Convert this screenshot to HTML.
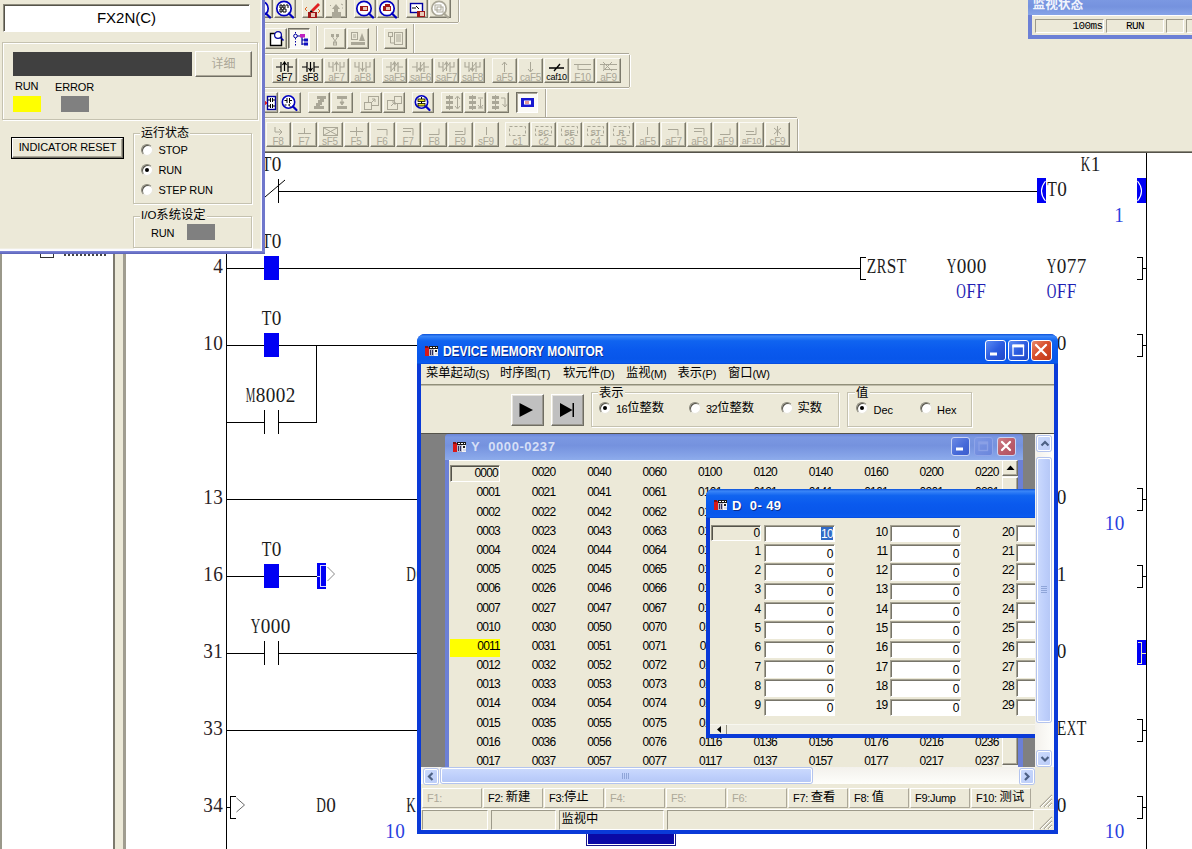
<!DOCTYPE html><html><head><meta charset="utf-8"><title>GX Developer</title><style>
html,body{margin:0;padding:0}
body{width:1192px;height:849px;position:relative;overflow:hidden;background:#fff;font-family:"Liberation Sans",sans-serif;font-size:11px;color:#000}
.a{position:absolute;box-sizing:border-box}
.fx{display:flex;align-items:center}
.lt{font-family:"Liberation Serif",serif;font-size:21px}
.btn{background:#ece9d8;border:1px solid;border-color:#fff #716f64 #716f64 #fff;box-shadow:inset -1px -1px 0 #aca899}
.tb{background:#ece9d8;border:1px solid;border-color:#fbfaf5 #7b796b #7b796b #fbfaf5;box-shadow:inset -1px -1px 0 #b3b09e}
.sunk{border:1px solid;border-color:#8d8b7c #fff #fff #8d8b7c;box-shadow:inset 1px 1px 0 #55534a}
.sunk2{border:1px solid;border-color:#a5a292 #fff #fff #a5a292;box-shadow:inset 1px 1px 0 #77756a}
.sunk1{border:1px solid;border-color:#9d9a8a #fff #fff #9d9a8a}
.grp{border:1px solid #c5c2b0;box-shadow:1px 1px 0 #fff, inset 1px 1px 0 #fff}
.radio{width:12px;height:12px;border-radius:50%;background:#fff;border:1px solid;border-color:#8a887a #e9e7dc #e9e7dc #8a887a;box-shadow:inset 1px 1px 0 #55534a}
.radio.on::after{content:"";position:absolute;left:3px;top:3px;width:4px;height:4px;border-radius:50%;background:#000}
.dis{color:#aca899}
.cj{display:block;flex:none;white-space:nowrap;letter-spacing:0;font-family:"Liberation Sans","Noto Sans CJK SC",sans-serif}

</style></head><body>
<div class="a " style="left:0px;top:0px;width:1192px;height:151px;background:#ece9d8"></div>
<div class="a " style="left:0px;top:151px;width:1192px;height:1px;background:#8d8b7c"></div>
<div class="a " style="left:0px;top:152px;width:1192px;height:1px;background:#55534a"></div>
<div class="a " style="left:0px;top:153px;width:2px;height:696px;background:#9a988a"></div>
<div class="a " style="left:113px;top:153px;width:2px;height:696px;background:#7d7a6e"></div>
<div class="a " style="left:115px;top:153px;width:8px;height:696px;background:#ece9d8"></div>
<div class="a " style="left:123px;top:153px;width:3px;height:696px;background:#a09d90"></div>
<svg class="a lt" style="left:0;top:0" width="1192" height="849" shape-rendering="crispEdges"><rect x="226" y="153" width="1" height="696" fill="#000"/><rect x="1146" y="153" width="1" height="696" fill="#000"/><rect x="226" y="191" width="38" height="1" fill="#000"/><rect x="264" y="179" width="1" height="24" fill="#000"/><rect x="278" y="179" width="1" height="24" fill="#000"/><rect x="278" y="191" width="759" height="1" fill="#000"/><line x1="265" y1="197" x2="285" y2="180" stroke="#000" stroke-width="1" shape-rendering="auto"/><text x="261.7" y="171" fill="#1c1c1c" textLength="9.6" lengthAdjust="spacingAndGlyphs">T</text><text x="271.7" y="171" fill="#1c1c1c" textLength="9.6" lengthAdjust="spacingAndGlyphs">0</text><text x="1080.7" y="171" fill="#1c1c1c" textLength="9.6" lengthAdjust="spacingAndGlyphs">K</text><text x="1090.7" y="171" fill="#1c1c1c" textLength="9.6" lengthAdjust="spacingAndGlyphs">1</text><rect x="1037" y="178" width="9" height="25" fill="#0000f4"/><rect x="1137" y="178" width="9" height="25" fill="#0000f4"/><path d="M1045.5 181 Q1037.5 191 1045.5 201" fill="none" stroke="#fff" stroke-width="1.1" shape-rendering="auto"/><path d="M1137.5 181 Q1145.5 191 1137.5 201" fill="none" stroke="#fff" stroke-width="1.1" shape-rendering="auto"/><text x="1047.2" y="196" fill="#1c1c1c" textLength="9.6" lengthAdjust="spacingAndGlyphs">T</text><text x="1057.2" y="196" fill="#1c1c1c" textLength="9.6" lengthAdjust="spacingAndGlyphs">0</text><text x="1114.2" y="221.5" fill="#2a3fe0" textLength="9.6" lengthAdjust="spacingAndGlyphs">1</text><text x="213.2" y="273" fill="#2a2226" textLength="9.6" lengthAdjust="spacingAndGlyphs">4</text><rect x="226" y="268" width="38" height="1" fill="#000"/><rect x="264" y="256" width="15" height="24" fill="#0000f4"/><rect x="279" y="268" width="581" height="1" fill="#000"/><rect x="860" y="257" width="1" height="23" fill="#000"/><rect x="860" y="257" width="6" height="1" fill="#000"/><rect x="860" y="279" width="6" height="1" fill="#000"/><text x="866.7" y="273" fill="#1c1c1c" textLength="9.6" lengthAdjust="spacingAndGlyphs">Z</text><text x="876.7" y="273" fill="#1c1c1c" textLength="9.6" lengthAdjust="spacingAndGlyphs">R</text><text x="886.7" y="273" fill="#1c1c1c" textLength="9.6" lengthAdjust="spacingAndGlyphs">S</text><text x="896.7" y="273" fill="#1c1c1c" textLength="9.6" lengthAdjust="spacingAndGlyphs">T</text><text x="946.7" y="273" fill="#1c1c1c" textLength="9.6" lengthAdjust="spacingAndGlyphs">Y</text><text x="956.7" y="273" fill="#1c1c1c" textLength="9.6" lengthAdjust="spacingAndGlyphs">0</text><text x="966.7" y="273" fill="#1c1c1c" textLength="9.6" lengthAdjust="spacingAndGlyphs">0</text><text x="976.7" y="273" fill="#1c1c1c" textLength="9.6" lengthAdjust="spacingAndGlyphs">0</text><text x="1046.7" y="273" fill="#1c1c1c" textLength="9.6" lengthAdjust="spacingAndGlyphs">Y</text><text x="1056.7" y="273" fill="#1c1c1c" textLength="9.6" lengthAdjust="spacingAndGlyphs">0</text><text x="1066.7" y="273" fill="#1c1c1c" textLength="9.6" lengthAdjust="spacingAndGlyphs">7</text><text x="1076.7" y="273" fill="#1c1c1c" textLength="9.6" lengthAdjust="spacingAndGlyphs">7</text><text x="956.2" y="298" fill="#1f1fb4" textLength="9.6" lengthAdjust="spacingAndGlyphs">O</text><text x="966.2" y="298" fill="#1f1fb4" textLength="9.6" lengthAdjust="spacingAndGlyphs">F</text><text x="976.2" y="298" fill="#1f1fb4" textLength="9.6" lengthAdjust="spacingAndGlyphs">F</text><text x="1046.7" y="298" fill="#1f1fb4" textLength="9.6" lengthAdjust="spacingAndGlyphs">O</text><text x="1056.7" y="298" fill="#1f1fb4" textLength="9.6" lengthAdjust="spacingAndGlyphs">F</text><text x="1066.7" y="298" fill="#1f1fb4" textLength="9.6" lengthAdjust="spacingAndGlyphs">F</text><rect x="1142" y="257" width="1" height="23" fill="#000"/><rect x="1137" y="257" width="6" height="1" fill="#000"/><rect x="1137" y="279" width="6" height="1" fill="#000"/><rect x="1142" y="268" width="4" height="1" fill="#000"/><text x="261.7" y="248" fill="#1c1c1c" textLength="9.6" lengthAdjust="spacingAndGlyphs">T</text><text x="271.7" y="248" fill="#1c1c1c" textLength="9.6" lengthAdjust="spacingAndGlyphs">0</text><text x="203.2" y="350" fill="#2a2226" textLength="9.6" lengthAdjust="spacingAndGlyphs">1</text><text x="213.2" y="350" fill="#2a2226" textLength="9.6" lengthAdjust="spacingAndGlyphs">0</text><rect x="226" y="345" width="38" height="1" fill="#000"/><rect x="264" y="333" width="15" height="24" fill="#0000f4"/><rect x="279" y="345" width="758" height="1" fill="#000"/><text x="261.7" y="325" fill="#1c1c1c" textLength="9.6" lengthAdjust="spacingAndGlyphs">T</text><text x="271.7" y="325" fill="#1c1c1c" textLength="9.6" lengthAdjust="spacingAndGlyphs">0</text><rect x="316" y="345" width="1" height="78" fill="#000"/><text x="1046.7" y="350" fill="#1c1c1c" textLength="9.6" lengthAdjust="spacingAndGlyphs">D</text><text x="1056.7" y="350" fill="#1c1c1c" textLength="9.6" lengthAdjust="spacingAndGlyphs">0</text><rect x="1142" y="334" width="1" height="23" fill="#000"/><rect x="1137" y="334" width="6" height="1" fill="#000"/><rect x="1137" y="356" width="6" height="1" fill="#000"/><rect x="1142" y="345" width="4" height="1" fill="#000"/><rect x="226" y="422" width="38" height="1" fill="#000"/><rect x="264" y="410" width="1" height="24" fill="#000"/><rect x="278" y="410" width="1" height="24" fill="#000"/><rect x="278" y="422" width="38" height="1" fill="#000"/><text x="245.7" y="402" fill="#1c1c1c" textLength="9.6" lengthAdjust="spacingAndGlyphs">M</text><text x="255.7" y="402" fill="#1c1c1c" textLength="9.6" lengthAdjust="spacingAndGlyphs">8</text><text x="265.7" y="402" fill="#1c1c1c" textLength="9.6" lengthAdjust="spacingAndGlyphs">0</text><text x="275.7" y="402" fill="#1c1c1c" textLength="9.6" lengthAdjust="spacingAndGlyphs">0</text><text x="285.7" y="402" fill="#1c1c1c" textLength="9.6" lengthAdjust="spacingAndGlyphs">2</text><text x="203.2" y="504" fill="#2a2226" textLength="9.6" lengthAdjust="spacingAndGlyphs">1</text><text x="213.2" y="504" fill="#2a2226" textLength="9.6" lengthAdjust="spacingAndGlyphs">3</text><rect x="226" y="499" width="811" height="1" fill="#000"/><text x="1046.7" y="504" fill="#1c1c1c" textLength="9.6" lengthAdjust="spacingAndGlyphs">K</text><text x="1056.7" y="504" fill="#1c1c1c" textLength="9.6" lengthAdjust="spacingAndGlyphs">0</text><rect x="1142" y="488" width="1" height="23" fill="#000"/><rect x="1137" y="488" width="6" height="1" fill="#000"/><rect x="1137" y="510" width="6" height="1" fill="#000"/><rect x="1142" y="499" width="4" height="1" fill="#000"/><text x="1104.7" y="530" fill="#2a3fe0" textLength="9.6" lengthAdjust="spacingAndGlyphs">1</text><text x="1114.7" y="530" fill="#2a3fe0" textLength="9.6" lengthAdjust="spacingAndGlyphs">0</text><text x="203.2" y="581" fill="#2a2226" textLength="9.6" lengthAdjust="spacingAndGlyphs">1</text><text x="213.2" y="581" fill="#2a2226" textLength="9.6" lengthAdjust="spacingAndGlyphs">6</text><rect x="226" y="576" width="38" height="1" fill="#000"/><rect x="264" y="564" width="15" height="24" fill="#0000f4"/><rect x="279" y="576" width="38" height="1" fill="#000"/><text x="261.7" y="556" fill="#1c1c1c" textLength="9.6" lengthAdjust="spacingAndGlyphs">T</text><text x="271.7" y="556" fill="#1c1c1c" textLength="9.6" lengthAdjust="spacingAndGlyphs">0</text><rect x="317" y="563" width="9" height="26" fill="#0000f4"/><path d="M325.5 565.5 H320.5 V586.5 H325.5" fill="none" stroke="#d8d8ff" stroke-width="1"/><rect x="317" y="576" width="3" height="1" fill="#d8d8ff"/><path d="M327.5 567 L334.5 574 L327.5 581" fill="none" stroke="#8a8a8a" stroke-width="1" shape-rendering="auto"/><text x="406.2" y="581" fill="#1c1c1c" textLength="9.6" lengthAdjust="spacingAndGlyphs">D</text><text x="416.2" y="581" fill="#1c1c1c" textLength="9.6" lengthAdjust="spacingAndGlyphs">0</text><text x="1046.7" y="581" fill="#1c1c1c" textLength="9.6" lengthAdjust="spacingAndGlyphs">D</text><text x="1056.7" y="581" fill="#1c1c1c" textLength="9.6" lengthAdjust="spacingAndGlyphs">1</text><rect x="1142" y="565" width="1" height="23" fill="#000"/><rect x="1137" y="565" width="6" height="1" fill="#000"/><rect x="1137" y="587" width="6" height="1" fill="#000"/><rect x="1142" y="576" width="4" height="1" fill="#000"/><text x="203.2" y="658" fill="#2a2226" textLength="9.6" lengthAdjust="spacingAndGlyphs">3</text><text x="213.2" y="658" fill="#2a2226" textLength="9.6" lengthAdjust="spacingAndGlyphs">1</text><rect x="226" y="653" width="38" height="1" fill="#000"/><rect x="264" y="641" width="1" height="24" fill="#000"/><rect x="278" y="641" width="1" height="24" fill="#000"/><rect x="278" y="653" width="759" height="1" fill="#000"/><text x="250.7" y="633" fill="#1c1c1c" textLength="9.6" lengthAdjust="spacingAndGlyphs">Y</text><text x="260.7" y="633" fill="#1c1c1c" textLength="9.6" lengthAdjust="spacingAndGlyphs">0</text><text x="270.7" y="633" fill="#1c1c1c" textLength="9.6" lengthAdjust="spacingAndGlyphs">0</text><text x="280.7" y="633" fill="#1c1c1c" textLength="9.6" lengthAdjust="spacingAndGlyphs">0</text><text x="1046.7" y="658" fill="#1c1c1c" textLength="9.6" lengthAdjust="spacingAndGlyphs">D</text><text x="1056.7" y="658" fill="#1c1c1c" textLength="9.6" lengthAdjust="spacingAndGlyphs">0</text><rect x="1137" y="640" width="9" height="25" fill="#0000f4"/><path d="M1137.5 642.5 H1141.5 V663.5 H1137.5" fill="none" stroke="#e8e8c0" stroke-width="1"/><rect x="1142" y="653" width="4" height="1" fill="#e8e8c0"/><text x="203.2" y="735" fill="#2a2226" textLength="9.6" lengthAdjust="spacingAndGlyphs">3</text><text x="213.2" y="735" fill="#2a2226" textLength="9.6" lengthAdjust="spacingAndGlyphs">3</text><rect x="226" y="730" width="811" height="1" fill="#000"/><text x="1046.7" y="735" fill="#1c1c1c" textLength="9.6" lengthAdjust="spacingAndGlyphs">N</text><text x="1056.7" y="735" fill="#1c1c1c" textLength="9.6" lengthAdjust="spacingAndGlyphs">E</text><text x="1066.7" y="735" fill="#1c1c1c" textLength="9.6" lengthAdjust="spacingAndGlyphs">X</text><text x="1076.7" y="735" fill="#1c1c1c" textLength="9.6" lengthAdjust="spacingAndGlyphs">T</text><rect x="1142" y="719" width="1" height="23" fill="#000"/><rect x="1137" y="719" width="6" height="1" fill="#000"/><rect x="1137" y="741" width="6" height="1" fill="#000"/><rect x="1142" y="730" width="4" height="1" fill="#000"/><text x="203.2" y="812" fill="#2a2226" textLength="9.6" lengthAdjust="spacingAndGlyphs">3</text><text x="213.2" y="812" fill="#2a2226" textLength="9.6" lengthAdjust="spacingAndGlyphs">4</text><rect x="226" y="807" width="4" height="1" fill="#000"/><rect x="230" y="796" width="1" height="23" fill="#000"/><rect x="230" y="796" width="6" height="1" fill="#000"/><rect x="230" y="818" width="6" height="1" fill="#000"/><path d="M236.5 798 L244.5 805 L236.5 812" fill="none" stroke="#6a6a6a" stroke-width="1" shape-rendering="auto"/><text x="316.2" y="812" fill="#1c1c1c" textLength="9.6" lengthAdjust="spacingAndGlyphs">D</text><text x="326.2" y="812" fill="#1c1c1c" textLength="9.6" lengthAdjust="spacingAndGlyphs">0</text><text x="406.2" y="812" fill="#1c1c1c" textLength="9.6" lengthAdjust="spacingAndGlyphs">K</text><text x="416.2" y="812" fill="#1c1c1c" textLength="9.6" lengthAdjust="spacingAndGlyphs">1</text><text x="426.2" y="812" fill="#1c1c1c" textLength="9.6" lengthAdjust="spacingAndGlyphs">0</text><text x="385.2" y="838" fill="#2a3fe0" textLength="9.6" lengthAdjust="spacingAndGlyphs">1</text><text x="395.2" y="838" fill="#2a3fe0" textLength="9.6" lengthAdjust="spacingAndGlyphs">0</text><text x="1046.7" y="812" fill="#1c1c1c" textLength="9.6" lengthAdjust="spacingAndGlyphs">D</text><text x="1056.7" y="812" fill="#1c1c1c" textLength="9.6" lengthAdjust="spacingAndGlyphs">0</text><rect x="1142" y="796" width="1" height="23" fill="#000"/><rect x="1137" y="796" width="6" height="1" fill="#000"/><rect x="1137" y="818" width="6" height="1" fill="#000"/><rect x="1142" y="807" width="4" height="1" fill="#000"/><text x="1104.7" y="838" fill="#2a3fe0" textLength="9.6" lengthAdjust="spacingAndGlyphs">1</text><text x="1114.7" y="838" fill="#2a3fe0" textLength="9.6" lengthAdjust="spacingAndGlyphs">0</text></svg>
<div class="a " style="left:40px;top:254px;width:14px;height:4px;border:1px solid #333;border-top:none"></div>
<div class="a " style="left:64px;top:254px;width:42px;height:2px;background:repeating-linear-gradient(90deg,#444 0 2px,#fff 2px 4px)"></div>
<div class="a " style="left:263px;top:22px;width:195px;height:1px;background:#aca899"></div>
<div class="a " style="left:263px;top:23px;width:195px;height:1px;background:#fff"></div>
<div class="a " style="left:458px;top:0px;width:1px;height:22px;background:#aca899"></div>
<div class="a " style="left:459px;top:0px;width:1px;height:22px;background:#fff"></div>
<div class="a " style="left:263px;top:53px;width:366px;height:1px;background:#aca899"></div>
<div class="a " style="left:263px;top:54px;width:366px;height:1px;background:#fff"></div>
<div class="a " style="left:413px;top:24px;width:1px;height:29px;background:#aca899"></div>
<div class="a " style="left:414px;top:24px;width:1px;height:29px;background:#fff"></div>
<div class="a " style="left:263px;top:87px;width:366px;height:1px;background:#aca899"></div>
<div class="a " style="left:263px;top:88px;width:366px;height:1px;background:#fff"></div>
<div class="a " style="left:629px;top:55px;width:1px;height:32px;background:#aca899"></div>
<div class="a " style="left:630px;top:55px;width:1px;height:32px;background:#fff"></div>
<div class="a " style="left:263px;top:117px;width:534px;height:1px;background:#aca899"></div>
<div class="a " style="left:263px;top:118px;width:534px;height:1px;background:#fff"></div>
<div class="a " style="left:545px;top:89px;width:1px;height:28px;background:#aca899"></div>
<div class="a " style="left:546px;top:89px;width:1px;height:28px;background:#fff"></div>
<div class="a " style="left:797px;top:119px;width:1px;height:32px;background:#aca899"></div>
<div class="a " style="left:798px;top:119px;width:1px;height:32px;background:#fff"></div>
<div class="a " style="left:316px;top:26px;width:1px;height:25px;background:#aca899"></div>
<div class="a " style="left:317px;top:26px;width:1px;height:25px;background:#fff"></div>
<div class="a " style="left:376px;top:26px;width:1px;height:25px;background:#aca899"></div>
<div class="a " style="left:377px;top:26px;width:1px;height:25px;background:#fff"></div>
<div class="a tb" style="left:251px;top:-4px;width:22px;height:22px;"><svg class="a" style="left:0px;top:2.5px" width="20" height="19" viewBox="0 0 20 19"><circle cx="9" cy="8.5" r="7.2" fill="#fff" stroke="#0000c0" stroke-width="1.7"/><rect x="5" y="5" width="7" height="6" fill="#222"/><path d="M14 13.5 L18 17.5" stroke="#0000c0" stroke-width="2.2" stroke-linecap="round"/></svg></div>
<div class="a tb" style="left:274px;top:-4px;width:22px;height:22px;"><svg class="a" style="left:0px;top:2.5px" width="20" height="19" viewBox="0 0 20 19"><circle cx="9" cy="8.5" r="7.2" fill="#fff" stroke="#0000c0" stroke-width="1.7"/><path d="M5 5h2v3h-2zM8 5h2v3h-2zM11 5h2v3M5 9h2v3h-2zM8 9h3v3h-3z" fill="none" stroke="#000" stroke-width="1"/><path d="M14 13.5 L18 17.5" stroke="#0000c0" stroke-width="2.2" stroke-linecap="round"/></svg></div>
<div class="a tb" style="left:302px;top:-4px;width:22px;height:22px;"><svg class="a" style="left:0px;top:2.5px" width="20" height="19" viewBox="0 0 20 19"><path d="M8 10 L15 3 L17 5 L10 12z" fill="#e02020"/><path d="M6 13l2-3 2 2z" fill="#000"/><rect x="5" y="12" width="9" height="6" fill="#a01818"/><rect x="8" y="13" width="4" height="4" fill="#e8c8b8"/><path d="M4 7l-2 2 2 2M15 9l2 2-2 2" fill="none" stroke="#e06020" stroke-width="1"/></svg></div>
<div class="a tb" style="left:325px;top:-4px;width:22px;height:22px;"><svg class="a" style="left:0px;top:2.5px" width="20" height="19" viewBox="0 0 20 19"><path d="M10 4l4 5h-2v4h-4v-4h-2z" fill="#aaa797"/><rect x="6" y="12" width="9" height="6" fill="#aaa797"/><path d="M4 5l1 1M15 4l2 1M16 8h1" stroke="#aaa797"/></svg></div>
<div class="a tb" style="left:354px;top:-4px;width:22px;height:22px;"><svg class="a" style="left:0px;top:2.5px" width="20" height="19" viewBox="0 0 20 19"><circle cx="9" cy="8.5" r="7.2" fill="#fff" stroke="#0000c0" stroke-width="1.7"/><rect x="5" y="6" width="8" height="5" fill="#a01818"/><rect x="8" y="7" width="4" height="3" fill="#e8c8b8"/><path d="M14 13.5 L18 17.5" stroke="#0000c0" stroke-width="2.2" stroke-linecap="round"/></svg></div>
<div class="a tb" style="left:377px;top:-4px;width:22px;height:22px;"><svg class="a" style="left:0px;top:2.5px" width="20" height="19" viewBox="0 0 20 19"><circle cx="9" cy="8.5" r="7.2" fill="#fff" stroke="#0000c0" stroke-width="1.7"/><rect x="5" y="6" width="8" height="5" fill="#a01818"/><rect x="8" y="7" width="4" height="3" fill="#e8c8b8"/><rect x="7" y="4" width="5" height="3" fill="#a01818"/><path d="M14 13.5 L18 17.5" stroke="#0000c0" stroke-width="2.2" stroke-linecap="round"/></svg></div>
<div class="a tb" style="left:406px;top:-4px;width:22px;height:22px;"><svg class="a" style="left:0px;top:2.5px" width="20" height="19" viewBox="0 0 20 19"><rect x="3.5" y="3.5" width="12" height="9" fill="#fff" stroke="#0000a0" stroke-width="1.4"/><path d="M5 8h4M9 6l3 3" stroke="#000"/><rect x="10" y="11" width="8" height="6" fill="#a01818"/><rect x="13" y="12" width="4" height="4" fill="#e8c8b8"/></svg></div>
<div class="a tb" style="left:429px;top:-4px;width:22px;height:22px;"><svg class="a" style="left:0px;top:2.5px" width="20" height="19" viewBox="0 0 20 19"><circle cx="9" cy="8.5" r="7.2" fill="#fff" stroke="#aaa797" stroke-width="1.7"/><rect x="5" y="5" width="6" height="5" fill="none" stroke="#aaa797"/><rect x="7" y="7" width="6" height="5" fill="none" stroke="#aaa797"/><path d="M14 13.5 L18 17.5" stroke="#aaa797" stroke-width="2.2" stroke-linecap="round"/></svg></div>
<div class="a tb" style="left:265px;top:28px;width:22px;height:21px;"><svg class="a" style="left:0px;top:0px" width="20" height="19" viewBox="0 0 20 19"><path d="M4.5 4.5h8l3 3v9h-11z" fill="#fff" stroke="#000" stroke-width="1.4"/><circle cx="12" cy="6" r="3.4" fill="#fff" stroke="#0000a0" stroke-width="1.2"/><path d="M14.5 8.5l3 3" stroke="#0000a0" stroke-width="1.6"/></svg></div>
<div class="a " style="left:288px;top:28px;width:22px;height:21px;background:#fbfaf6;border:1px solid;border-color:#716f64 #fff #fff #716f64;box-shadow:inset 1px 1px 0 #aca899"><svg class="a" style="left:0px;top:0px" width="20" height="19" viewBox="0 0 20 19"><path d="M6.5 3v15" stroke="#0000a0" stroke-dasharray="1.5 1.5"/><circle cx="6.5" cy="7" r="1.8" fill="#fff" stroke="#0000a0"/><path d="M8 7h4M13 8v8M13 11h3M13 15h3" stroke="#0000a0" stroke-width="1.2"/><rect x="11" y="5" width="5" height="3.5" fill="#c020c0"/><rect x="15" y="9.5" width="4" height="3" fill="#1010c0"/><rect x="15" y="13.5" width="4" height="3" fill="#1010c0"/></svg></div>
<div class="a tb" style="left:324px;top:28px;width:22px;height:21px;"><svg class="a" style="left:0px;top:0px" width="20" height="19" viewBox="0 0 20 19"><rect x="6" y="5" width="3" height="3" fill="#aaa797"/><rect x="11" y="5" width="3" height="3" fill="#aaa797"/><path d="M7.5 8l2.5 4 2.5-4M10 12v3" fill="none" stroke="#aaa797"/><rect x="8.5" y="13" width="3" height="3" fill="none" stroke="#aaa797"/></svg></div>
<div class="a tb" style="left:347px;top:28px;width:22px;height:21px;"><svg class="a" style="left:0px;top:0px" width="20" height="19" viewBox="0 0 20 19"><rect x="3.5" y="3.5" width="6" height="7" fill="none" stroke="#aaa797"/><path d="M5 6h3M5 8h3" stroke="#aaa797"/><path d="M11 12l3-8 3 8z" fill="#aaa797"/><rect x="3" y="13" width="14" height="3" fill="#aaa797"/></svg></div>
<div class="a tb" style="left:384px;top:28px;width:23px;height:21px;"><svg class="a" style="left:0px;top:0px" width="20" height="19" viewBox="0 0 20 19"><rect x="3.5" y="3.5" width="4" height="4" fill="none" stroke="#aaa797"/><rect x="9.5" y="3.5" width="8" height="12" fill="none" stroke="#aaa797"/><path d="M11 6h5M11 8h5M11 10h5M11 12h5M5.5 8v6h4" fill="none" stroke="#aaa797"/></svg></div>
<div class="a tb" style="left:272px;top:58px;width:25px;height:25px;"><svg class="a" style="left:0px;top:2px" width="23" height="12" viewBox="0 0 23 12"><path d="M3 6h5M15 6h5M8 1v10M15 1v10M11.5 1v9M9.5 4l2-3 2 3" fill="none" stroke="#000" stroke-width="1.2"/></svg><div class="a" style="left:-1px;top:12.5px;width:25px;text-align:center;font-size:10px;line-height:11px;color:#000;letter-spacing:-0.3px;white-space:nowrap">sF7</div></div>
<div class="a tb" style="left:298px;top:58px;width:25px;height:25px;"><svg class="a" style="left:0px;top:2px" width="23" height="12" viewBox="0 0 23 12"><path d="M3 6h5M15 6h5M8 1v10M15 1v10M11.5 1v9M9.5 7l2 3 2-3" fill="none" stroke="#000" stroke-width="1.2"/></svg><div class="a" style="left:-1px;top:12.5px;width:25px;text-align:center;font-size:10px;line-height:11px;color:#000;letter-spacing:-0.3px;white-space:nowrap">sF8</div></div>
<div class="a tb" style="left:324px;top:58px;width:25px;height:25px;"><svg class="a" style="left:0px;top:2px" width="23" height="12" viewBox="0 0 23 12"><path d="M4 1v5h4M19 1v5h-4M8 1v10M15 1v10M11.5 1v9M9.5 4l2-3 2 3" fill="none" stroke="#aaa797" stroke-width="1.1"/></svg><div class="a" style="left:-1px;top:12.5px;width:25px;text-align:center;font-size:10px;line-height:11px;color:#aaa797;letter-spacing:-0.3px;white-space:nowrap">aF7</div></div>
<div class="a tb" style="left:350px;top:58px;width:25px;height:25px;"><svg class="a" style="left:0px;top:2px" width="23" height="12" viewBox="0 0 23 12"><path d="M4 1v5h4M19 1v5h-4M8 1v10M15 1v10M11.5 1v9M9.5 7l2 3 2-3" fill="none" stroke="#aaa797" stroke-width="1.1"/></svg><div class="a" style="left:-1px;top:12.5px;width:25px;text-align:center;font-size:10px;line-height:11px;color:#aaa797;letter-spacing:-0.3px;white-space:nowrap">aF8</div></div>
<div class="a tb" style="left:382px;top:58px;width:25px;height:25px;"><svg class="a" style="left:0px;top:2px" width="23" height="12" viewBox="0 0 23 12"><path d="M3 6h5M15 6h5M8 1v10M15 1v10M11.5 1v9M9.5 4l2-3 2 3" fill="none" stroke="#aaa797" stroke-width="1.2"/><path d="M8 10l7-8" stroke="#aaa797"/></svg><div class="a" style="left:-1px;top:12.5px;width:25px;text-align:center;font-size:10px;line-height:11px;color:#aaa797;letter-spacing:-0.3px;white-space:nowrap">saF5</div></div>
<div class="a tb" style="left:408px;top:58px;width:25px;height:25px;"><svg class="a" style="left:0px;top:2px" width="23" height="12" viewBox="0 0 23 12"><path d="M3 6h5M15 6h5M8 1v10M15 1v10M11.5 1v9M9.5 7l2 3 2-3" fill="none" stroke="#aaa797" stroke-width="1.2"/><path d="M8 10l7-8" stroke="#aaa797"/></svg><div class="a" style="left:-1px;top:12.5px;width:25px;text-align:center;font-size:10px;line-height:11px;color:#aaa797;letter-spacing:-0.3px;white-space:nowrap">saF6</div></div>
<div class="a tb" style="left:434px;top:58px;width:25px;height:25px;"><svg class="a" style="left:0px;top:2px" width="23" height="12" viewBox="0 0 23 12"><path d="M4 1v5h4M19 1v5h-4M8 1v10M15 1v10M11.5 1v9M9.5 4l2-3 2 3" fill="none" stroke="#aaa797" stroke-width="1.1"/><path d="M8 10l7-8" stroke="#aaa797"/></svg><div class="a" style="left:-1px;top:12.5px;width:25px;text-align:center;font-size:10px;line-height:11px;color:#aaa797;letter-spacing:-0.3px;white-space:nowrap">saF7</div></div>
<div class="a tb" style="left:460px;top:58px;width:25px;height:25px;"><svg class="a" style="left:0px;top:2px" width="23" height="12" viewBox="0 0 23 12"><path d="M4 1v5h4M19 1v5h-4M8 1v10M15 1v10M11.5 1v9M9.5 7l2 3 2-3" fill="none" stroke="#aaa797" stroke-width="1.1"/><path d="M8 10l7-8" stroke="#aaa797"/></svg><div class="a" style="left:-1px;top:12.5px;width:25px;text-align:center;font-size:10px;line-height:11px;color:#aaa797;letter-spacing:-0.3px;white-space:nowrap">saF8</div></div>
<div class="a tb" style="left:492px;top:58px;width:25px;height:25px;"><svg class="a" style="left:0px;top:2px" width="23" height="12" viewBox="0 0 23 12"><path d="M11.5 1v10M9 4l2.5-3 2.5 3" fill="none" stroke="#aaa797"/></svg><div class="a" style="left:-1px;top:12.5px;width:25px;text-align:center;font-size:10px;line-height:11px;color:#aaa797;letter-spacing:-0.3px;white-space:nowrap">aF5</div></div>
<div class="a tb" style="left:518px;top:58px;width:25px;height:25px;"><svg class="a" style="left:0px;top:2px" width="23" height="12" viewBox="0 0 23 12"><path d="M11.5 1v10M9 8l2.5 3 2.5-3" fill="none" stroke="#aaa797"/></svg><div class="a" style="left:-1px;top:12.5px;width:25px;text-align:center;font-size:10px;line-height:11px;color:#aaa797;letter-spacing:-0.3px;white-space:nowrap">caF5</div></div>
<div class="a tb" style="left:544px;top:58px;width:25px;height:25px;"><svg class="a" style="left:0px;top:2px" width="23" height="12" viewBox="0 0 23 12"><path d="M4 7h15M9 10l6-7" fill="none" stroke="#000" stroke-width="1.3"/></svg><div class="a" style="left:-1px;top:12.5px;width:25px;text-align:center;font-size:9px;line-height:11px;color:#000;letter-spacing:-0.3px;white-space:nowrap">caf10</div></div>
<div class="a tb" style="left:570px;top:58px;width:25px;height:25px;"><svg class="a" style="left:0px;top:2px" width="23" height="12" viewBox="0 0 23 12"><path d="M3 3.500h17M7 3v6M7 8.500h13" fill="none" stroke="#aaa797"/></svg><div class="a" style="left:-1px;top:12.5px;width:25px;text-align:center;font-size:10px;line-height:11px;color:#aaa797;letter-spacing:-0.3px;white-space:nowrap">F10</div></div>
<div class="a tb" style="left:596px;top:58px;width:25px;height:25px;"><svg class="a" style="left:0px;top:2px" width="23" height="12" viewBox="0 0 23 12"><path d="M3 3.500h17M7 3v6M7 8.500h13M6 1l9 9M15 1l-9 9" fill="none" stroke="#aaa797"/></svg><div class="a" style="left:-1px;top:12.5px;width:25px;text-align:center;font-size:10px;line-height:11px;color:#aaa797;letter-spacing:-0.3px;white-space:nowrap">aF9</div></div>
<div class="a tb" style="left:265.5px;top:122px;width:25px;height:25px;"><svg class="a" style="left:0px;top:2px" width="23" height="12" viewBox="0 0 23 12"><path d="M8 2v5h7M12 4l3 3-3 3" fill="none" stroke="#aaa797"/></svg><div class="a" style="left:-1px;top:12.5px;width:25px;text-align:center;font-size:10px;line-height:11px;color:#aaa797;letter-spacing:-0.3px;white-space:nowrap">F8</div></div>
<div class="a tb" style="left:291.5px;top:122px;width:25px;height:25px;"><svg class="a" style="left:0px;top:2px" width="23" height="12" viewBox="0 0 23 12"><path d="M11.5 3v5M5 8.500h13" fill="none" stroke="#aaa797"/></svg><div class="a" style="left:-1px;top:12.5px;width:25px;text-align:center;font-size:10px;line-height:11px;color:#aaa797;letter-spacing:-0.3px;white-space:nowrap">F7</div></div>
<div class="a tb" style="left:317.5px;top:122px;width:25px;height:25px;"><svg class="a" style="left:0px;top:2px" width="23" height="12" viewBox="0 0 23 12"><rect x="4.500" y="2.500" width="14" height="8" fill="none" stroke="#aaa797"/><path d="M5 3l13 7M18 3l-13 7" stroke="#aaa797"/></svg><div class="a" style="left:-1px;top:12.5px;width:25px;text-align:center;font-size:10px;line-height:11px;color:#aaa797;letter-spacing:-0.3px;white-space:nowrap">sF5</div></div>
<div class="a tb" style="left:343.5px;top:122px;width:25px;height:25px;"><svg class="a" style="left:0px;top:2px" width="23" height="12" viewBox="0 0 23 12"><path d="M11.5 2v9M5 6.500h13" fill="none" stroke="#aaa797"/></svg><div class="a" style="left:-1px;top:12.5px;width:25px;text-align:center;font-size:10px;line-height:11px;color:#aaa797;letter-spacing:-0.3px;white-space:nowrap">F5</div></div>
<div class="a tb" style="left:369.5px;top:122px;width:25px;height:25px;"><svg class="a" style="left:0px;top:2px" width="23" height="12" viewBox="0 0 23 12"><path d="M6 4.500h10v6" fill="none" stroke="#aaa797"/></svg><div class="a" style="left:-1px;top:12.5px;width:25px;text-align:center;font-size:10px;line-height:11px;color:#aaa797;letter-spacing:-0.3px;white-space:nowrap">F6</div></div>
<div class="a tb" style="left:395.5px;top:122px;width:25px;height:25px;"><svg class="a" style="left:0px;top:2px" width="23" height="12" viewBox="0 0 23 12"><path d="M6 3.500h10v7M6 6.500h8" fill="none" stroke="#aaa797"/></svg><div class="a" style="left:-1px;top:12.5px;width:25px;text-align:center;font-size:10px;line-height:11px;color:#aaa797;letter-spacing:-0.3px;white-space:nowrap">F7</div></div>
<div class="a tb" style="left:421.5px;top:122px;width:25px;height:25px;"><svg class="a" style="left:0px;top:2px" width="23" height="12" viewBox="0 0 23 12"><path d="M6 9.500h10v-6" fill="none" stroke="#aaa797"/></svg><div class="a" style="left:-1px;top:12.5px;width:25px;text-align:center;font-size:10px;line-height:11px;color:#aaa797;letter-spacing:-0.3px;white-space:nowrap">F8</div></div>
<div class="a tb" style="left:447.5px;top:122px;width:25px;height:25px;"><svg class="a" style="left:0px;top:2px" width="23" height="12" viewBox="0 0 23 12"><path d="M6 9.500h10v-7M6 6.500h8" fill="none" stroke="#aaa797"/></svg><div class="a" style="left:-1px;top:12.5px;width:25px;text-align:center;font-size:10px;line-height:11px;color:#aaa797;letter-spacing:-0.3px;white-space:nowrap">F9</div></div>
<div class="a tb" style="left:473.5px;top:122px;width:25px;height:25px;"><svg class="a" style="left:0px;top:2px" width="23" height="12" viewBox="0 0 23 12"><path d="M11.500 2v8" stroke="#aaa797"/></svg><div class="a" style="left:-1px;top:12.5px;width:25px;text-align:center;font-size:10px;line-height:11px;color:#aaa797;letter-spacing:-0.3px;white-space:nowrap">sF9</div></div>
<div class="a tb" style="left:505px;top:122px;width:25px;height:25px;"><svg class="a" style="left:0px;top:2px" width="23" height="12" viewBox="0 0 23 12"><rect x="3.500" y="1.500" width="16" height="9" fill="none" stroke="#aaa797" stroke-dasharray="3 2"/></svg><div class="a" style="left:-1px;top:12.5px;width:25px;text-align:center;font-size:10px;line-height:11px;color:#aaa797;letter-spacing:-0.3px;white-space:nowrap">c1</div></div>
<div class="a tb" style="left:531px;top:122px;width:25px;height:25px;"><svg class="a" style="left:0px;top:2px" width="23" height="12" viewBox="0 0 23 12"><rect x="3.500" y="1.500" width="16" height="9" fill="none" stroke="#aaa797" stroke-dasharray="3 2"/><text x="11.5" y="9.500" font-size="8" text-anchor="middle" fill="#aaa797" font-family="Liberation Sans,sans-serif" font-weight="bold">SC</text></svg><div class="a" style="left:-1px;top:12.5px;width:25px;text-align:center;font-size:10px;line-height:11px;color:#aaa797;letter-spacing:-0.3px;white-space:nowrap">c2</div></div>
<div class="a tb" style="left:557px;top:122px;width:25px;height:25px;"><svg class="a" style="left:0px;top:2px" width="23" height="12" viewBox="0 0 23 12"><rect x="3.500" y="1.500" width="16" height="9" fill="none" stroke="#aaa797" stroke-dasharray="3 2"/><text x="11.5" y="9.500" font-size="8" text-anchor="middle" fill="#aaa797" font-family="Liberation Sans,sans-serif" font-weight="bold">SE</text></svg><div class="a" style="left:-1px;top:12.5px;width:25px;text-align:center;font-size:10px;line-height:11px;color:#aaa797;letter-spacing:-0.3px;white-space:nowrap">c3</div></div>
<div class="a tb" style="left:583px;top:122px;width:25px;height:25px;"><svg class="a" style="left:0px;top:2px" width="23" height="12" viewBox="0 0 23 12"><rect x="3.500" y="1.500" width="16" height="9" fill="none" stroke="#aaa797" stroke-dasharray="3 2"/><text x="11.5" y="9.500" font-size="8" text-anchor="middle" fill="#aaa797" font-family="Liberation Sans,sans-serif" font-weight="bold">ST</text></svg><div class="a" style="left:-1px;top:12.5px;width:25px;text-align:center;font-size:10px;line-height:11px;color:#aaa797;letter-spacing:-0.3px;white-space:nowrap">c4</div></div>
<div class="a tb" style="left:609px;top:122px;width:25px;height:25px;"><svg class="a" style="left:0px;top:2px" width="23" height="12" viewBox="0 0 23 12"><rect x="3.500" y="1.500" width="16" height="9" fill="none" stroke="#aaa797" stroke-dasharray="3 2"/><text x="11.5" y="9.500" font-size="8" text-anchor="middle" fill="#aaa797" font-family="Liberation Sans,sans-serif" font-weight="bold">R</text></svg><div class="a" style="left:-1px;top:12.5px;width:25px;text-align:center;font-size:10px;line-height:11px;color:#aaa797;letter-spacing:-0.3px;white-space:nowrap">c5</div></div>
<div class="a tb" style="left:635px;top:122px;width:25px;height:25px;"><svg class="a" style="left:0px;top:2px" width="23" height="12" viewBox="0 0 23 12"><path d="M11.500 2v8" stroke="#aaa797"/></svg><div class="a" style="left:-1px;top:12.5px;width:25px;text-align:center;font-size:10px;line-height:11px;color:#aaa797;letter-spacing:-0.3px;white-space:nowrap">aF5</div></div>
<div class="a tb" style="left:661px;top:122px;width:25px;height:25px;"><svg class="a" style="left:0px;top:2px" width="23" height="12" viewBox="0 0 23 12"><path d="M6 4.500h10v6" fill="none" stroke="#aaa797"/></svg><div class="a" style="left:-1px;top:12.5px;width:25px;text-align:center;font-size:10px;line-height:11px;color:#aaa797;letter-spacing:-0.3px;white-space:nowrap">aF7</div></div>
<div class="a tb" style="left:687px;top:122px;width:25px;height:25px;"><svg class="a" style="left:0px;top:2px" width="23" height="12" viewBox="0 0 23 12"><path d="M6 3.500h10v7M6 6.500h8" fill="none" stroke="#aaa797"/></svg><div class="a" style="left:-1px;top:12.5px;width:25px;text-align:center;font-size:10px;line-height:11px;color:#aaa797;letter-spacing:-0.3px;white-space:nowrap">aF8</div></div>
<div class="a tb" style="left:713px;top:122px;width:25px;height:25px;"><svg class="a" style="left:0px;top:2px" width="23" height="12" viewBox="0 0 23 12"><path d="M6 9.500h10v-6" fill="none" stroke="#aaa797"/></svg><div class="a" style="left:-1px;top:12.5px;width:25px;text-align:center;font-size:10px;line-height:11px;color:#aaa797;letter-spacing:-0.3px;white-space:nowrap">aF9</div></div>
<div class="a tb" style="left:739px;top:122px;width:25px;height:25px;"><svg class="a" style="left:0px;top:2px" width="23" height="12" viewBox="0 0 23 12"><path d="M6 9.500h10v-7M6 6.500h8" fill="none" stroke="#aaa797"/></svg><div class="a" style="left:-1px;top:12.5px;width:25px;text-align:center;font-size:9px;line-height:11px;color:#aaa797;letter-spacing:-0.3px;white-space:nowrap">aF10</div></div>
<div class="a tb" style="left:765px;top:122px;width:25px;height:25px;"><svg class="a" style="left:0px;top:2px" width="23" height="12" viewBox="0 0 23 12"><path d="M11.500 1v10M8 3l7 6M15 3l-7 6" fill="none" stroke="#aaa797"/></svg><div class="a" style="left:-1px;top:12.5px;width:25px;text-align:center;font-size:10px;line-height:11px;color:#aaa797;letter-spacing:-0.3px;white-space:nowrap">cF9</div></div>
<div class="a tb" style="left:256px;top:92px;width:22px;height:21px;"><svg class="a" style="left:0px;top:0px" width="20" height="19" viewBox="0 0 20 19"><rect x="10.500" y="3.500" width="8" height="13" fill="#fff" stroke="#0000a0" stroke-width="1.400"/><path d="M11 7h2.500M15.500 7h2.500M13.500 5v4M15.500 5v4M11 13h2.500M15.500 13h2.500M13.500 11v4M15.500 11v4" stroke="#000"/><path d="M6 10h3M7 7.500l3 2.500-3 2.500z" fill="#e02020" stroke="#e02020"/></svg></div>
<div class="a tb" style="left:279px;top:92px;width:22px;height:21px;"><svg class="a" style="left:0px;top:0px" width="20" height="19" viewBox="0 0 20 19"><circle cx="8.500" cy="9" r="6.2" fill="#fff" stroke="#0000c0" stroke-width="1.600"/><path d="M4.500 7.500h2.500M9.500 7.500h2.500M7 5v5M9.500 5v5M4.500 12h2M8.500 12l2-1.500M8.500 12l2 1.500" fill="none" stroke="#000" stroke-width="1"/><path d="M13 13.500 L16.500 17" stroke="#0000c0" stroke-width="2.200" stroke-linecap="round"/></svg></div>
<div class="a tb" style="left:308px;top:92px;width:22px;height:21px;"><svg class="a" style="left:0px;top:0px" width="20" height="19" viewBox="0 0 20 19"><path d="M8 3h9v3h-2v3h-2v3h-2v1h4v3h-10v-3h2v-3h2v-3h2v-1h-3z" fill="#aaa797"/></svg></div>
<div class="a tb" style="left:331px;top:92px;width:22px;height:21px;"><svg class="a" style="left:0px;top:0px" width="20" height="19" viewBox="0 0 20 19"><rect x="5" y="3" width="10" height="3" fill="#aaa797"/><rect x="5" y="13" width="10" height="3" fill="#aaa797"/><path d="M10 6v4M8 9l2 3 2-3z" fill="#aaa797" stroke="#aaa797"/></svg></div>
<div class="a tb" style="left:360px;top:92px;width:22px;height:21px;"><svg class="a" style="left:0px;top:0px" width="20" height="19" viewBox="0 0 20 19"><rect x="7.500" y="3.500" width="10" height="9" fill="none" stroke="#aaa797"/><rect x="3.500" y="9.500" width="7" height="7" fill="#ece9d8" stroke="#aaa797"/><path d="M10 10l4-4M11 6h3v3" fill="none" stroke="#aaa797"/></svg></div>
<div class="a tb" style="left:383px;top:92px;width:22px;height:21px;"><svg class="a" style="left:0px;top:0px" width="20" height="19" viewBox="0 0 20 19"><rect x="3.500" y="7.500" width="10" height="9" fill="none" stroke="#aaa797"/><rect x="10.500" y="3.500" width="7" height="7" fill="#ece9d8" stroke="#aaa797"/><path d="M7 13l4-4M8 9h3v3" fill="none" stroke="#aaa797"/></svg></div>
<div class="a tb" style="left:412px;top:92px;width:22px;height:21px;"><svg class="a" style="left:0px;top:0px" width="20" height="19" viewBox="0 0 20 19"><circle cx="8.500" cy="9" r="6.2" fill="#fff" stroke="#0000c0" stroke-width="1.600"/><rect x="5" y="6" width="7" height="2.500" fill="#e8e020" stroke="#000" stroke-width=".8"/><rect x="5" y="10.500" width="7" height="2.500" fill="#e8e020" stroke="#000" stroke-width=".8"/><path d="M8.500 4v2M8.500 8.500v2" stroke="#000"/><path d="M13 13.500 L16.500 17" stroke="#0000c0" stroke-width="2.200" stroke-linecap="round"/></svg></div>
<div class="a tb" style="left:441px;top:92px;width:22px;height:21px;"><svg class="a" style="left:0px;top:0px" width="20" height="19" viewBox="0 0 20 19"><rect x="4" y="3" width="7" height="3" fill="#aaa797"/><rect x="4" y="8" width="7" height="3" fill="#aaa797"/><rect x="4" y="13" width="7" height="3" fill="#aaa797"/><path d="M7.500 2v15" stroke="#aaa797"/><path d="M15.500 4v11M13 6l2.500-3 2.500 3M13 13l2.500 3 2.500-3" fill="none" stroke="#aaa797"/></svg></div>
<div class="a tb" style="left:464px;top:92px;width:22px;height:21px;"><svg class="a" style="left:0px;top:0px" width="20" height="19" viewBox="0 0 20 19"><rect x="4" y="3" width="7" height="3" fill="#aaa797"/><rect x="4" y="8" width="7" height="3" fill="#aaa797"/><rect x="4" y="13" width="7" height="3" fill="#aaa797"/><path d="M7.500 2v15" stroke="#aaa797"/><path d="M15.500 6v8M13 5h5M13 15h5M13 12l2.500 3 2.500-3" fill="none" stroke="#aaa797"/></svg></div>
<div class="a tb" style="left:487px;top:92px;width:22px;height:21px;"><svg class="a" style="left:0px;top:0px" width="20" height="19" viewBox="0 0 20 19"><rect x="4" y="3" width="7" height="3" fill="#aaa797"/><rect x="4" y="8" width="7" height="3" fill="#aaa797"/><rect x="4" y="13" width="7" height="3" fill="#aaa797"/><path d="M7.500 2v15" stroke="#aaa797"/><path d="M13 5h4v8M14.500 11l2.500 3 2.500-3" fill="none" stroke="#aaa797"/></svg></div>
<div class="a " style="left:516px;top:92px;width:22px;height:21px;background:#fbfaf6;border:1px solid;border-color:#716f64 #fff #fff #716f64;box-shadow:inset 1px 1px 0 #aca899"><svg class="a" style="left:0px;top:0px" width="20" height="19" viewBox="0 0 20 19"><rect x="4" y="5" width="13" height="9" fill="#1818d0"/><rect x="7" y="7.500" width="7" height="4" fill="#fff"/><path d="M9 8v3M11 8v3" stroke="#c03030"/></svg></div>
<div class="a " style="left:0px;top:0px;width:265px;height:254px;background:linear-gradient(180deg,#6f77cc 0,#6f77cc 250px,#8088d8 251px,#5860b8 254px)"></div>
<div class="a " style="left:0px;top:0px;width:262px;height:250.5px;background:#ece9d8;border-right:1.500px solid #fbfbff;border-bottom:2px solid #fbfbff;box-shadow:inset -1px -1px 0 #f1efe4"></div>
<div class="a sunk" style="left:3px;top:4px;width:247px;height:28px;background:#fff"></div>
<div class="a" style="left:3px;top:4px;height:27px;line-height:27px;font-size:15px;color:#000;white-space:pre;width:247px;text-align:center;">FX2N(C)</div>
<div class="a grp" style="left:2px;top:42px;width:256px;height:78px;"></div>
<div class="a " style="left:13px;top:52px;width:179px;height:24px;background:#404040"></div>
<div class="a btn" style="left:195px;top:51px;width:57px;height:26px;"><div class="a fx" style="left:0;top:0;width:55px;height:24px;justify-content:center"><span class="cj" style="width:24px;font-size:12px;line-height:12px;color:#aca899">详细</span></div></div>
<div class="a" style="left:15px;top:80px;height:13px;line-height:13px;font-size:11px;color:#000;white-space:pre;letter-spacing:-.15px">RUN</div>
<div class="a" style="left:55px;top:81px;height:13px;line-height:13px;font-size:11px;color:#000;white-space:pre;letter-spacing:-.15px">ERROR</div>
<div class="a " style="left:13px;top:96px;width:28px;height:16px;background:#ffff00"></div>
<div class="a " style="left:61px;top:96px;width:28px;height:16px;background:#808080"></div>
<div class="a " style="left:11px;top:137px;width:113px;height:22px;border:1px solid #000;background:#ece9d8"><div class="a btn" style="left:0px;top:0px;width:111px;height:20px;"></div></div>
<div class="a" style="left:11px;top:137px;height:21px;line-height:21px;font-size:11px;color:#000;white-space:pre;width:113px;text-align:center;letter-spacing:-.1px">INDICATOR RESET</div>
<div class="a grp" style="left:133px;top:133px;width:119px;height:71px;"></div>
<div class="a fx" style="left:140px;top:126px;width:50px;height:13px;background:#ece9d8"><span class="cj" style="width:48px;font-size:12px;line-height:12px;color:#000;margin-left:1px">运行状态</span></div>
<div class="a radio" style="left:141px;top:144px;width:12px;height:12px;"></div>
<div class="a" style="left:158.5px;top:143px;height:14px;line-height:14px;font-size:11px;color:#000;white-space:pre;letter-spacing:-.15px">STOP</div>
<div class="a radio on" style="left:141px;top:164px;width:12px;height:12px;"></div>
<div class="a" style="left:158.5px;top:163px;height:14px;line-height:14px;font-size:11px;color:#000;white-space:pre;letter-spacing:-.15px">RUN</div>
<div class="a radio" style="left:141px;top:183.5px;width:12px;height:12px;"></div>
<div class="a" style="left:158.5px;top:182.5px;height:14px;line-height:14px;font-size:11px;color:#000;white-space:pre;letter-spacing:-.15px">STEP RUN</div>
<div class="a grp" style="left:133px;top:216px;width:119px;height:32px;"></div>
<div class="a fx " style="left:140px;top:208px;height:14px;color:#000;font-size:11.5px;background:#ece9d8;padding:0 1px"><span style="white-space:pre">I/O</span><span class="cj" style="width:49.2px;font-size:12.3px;line-height:12.3px;color:#000">系统设定</span></div>
<div class="a" style="left:151px;top:226px;height:14px;line-height:14px;font-size:11px;color:#000;white-space:pre;letter-spacing:-.15px">RUN</div>
<div class="a " style="left:187px;top:224px;width:28px;height:16px;background:#808080"></div>
<div class="a " style="left:1028px;top:0px;width:170px;height:39px;background:#6c80d6"></div>
<div class="a " style="left:1028px;top:0px;width:170px;height:15px;background:linear-gradient(180deg,#7b98e2 0%,#7592de 45%,#86a4e8 100%)"></div>
<div class="a" style="left:1032.500px;top:-2.500px"><span class="cj" style="width:50.8px;font-size:12.7px;line-height:12.7px;color:#f0f3fc;font-weight:bold">监视状态</span></div>
<div class="a " style="left:1032px;top:15px;width:166px;height:20px;background:#ece9d8;border-top:1px solid #fff"></div>
<div class="a sunk1" style="left:1035px;top:19px;width:69px;height:13.5px;"></div>
<div class="a sunk1" style="left:1106px;top:19px;width:58px;height:13.5px;"></div>
<div class="a sunk1" style="left:1166px;top:19px;width:17.5px;height:13.5px;"></div>
<div class="a sunk1" style="left:1185.5px;top:19px;width:14.5px;height:13.5px;"></div>
<div class="a" style="left:1035px;top:19px;width:67.500px;height:14px;line-height:14px;text-align:right;font-family:'Liberation Mono',monospace;font-size:11px;letter-spacing:-.6px">100ms</div>
<div class="a" style="left:1106px;top:19px;width:58px;height:14px;line-height:14px;text-align:center;font-family:'Liberation Mono',monospace;font-size:11px;letter-spacing:-.6px">RUN</div>
<div class="a " style="left:417px;top:334px;width:641px;height:500px;background:#0a3ad8;border-radius:8px 8px 0 0"></div>
<div class="a " style="left:417px;top:334px;width:641px;height:31px;border-radius:8px 8px 0 0;background:linear-gradient(180deg,#0a50d8 0%,#3a86f8 7%,#1064f0 22%,#0a5aee 50%,#0856ea 80%,#0a5af0 92%,#043cc4 100%)"></div>
<svg class="a" style="left:425px;top:346px" width="14" height="10" viewBox="0 0 14 10" shape-rendering="crispEdges"><rect x="0" y="1" width="4" height="9" fill="#d81818"/><rect x="0" y="0" width="3" height="2" fill="#801010"/><rect x="4" y="0" width="9" height="3" fill="#181818"/><rect x="5" y="1" width="2" height="1" fill="#fff"/><rect x="8" y="1" width="2" height="1" fill="#fff"/><rect x="11" y="1" width="1" height="1" fill="#fff"/><rect x="4" y="3" width="5" height="7" fill="#b8b8c8"/><rect x="5" y="4" width="1" height="5" fill="#303060"/><rect x="7" y="4" width="1" height="5" fill="#303060"/><rect x="9" y="3" width="4" height="7" fill="#f4f4f4"/><rect x="10" y="4" width="2" height="2" fill="#202020"/><rect x="10" y="7" width="3" height="2" fill="#d8d8e8"/></svg>
<div class="a" style="left:443px;top:342.6px;height:17px;line-height:17px;font-size:14px;color:#fff;white-space:pre;font-weight:bold;text-shadow:1px 1px 0 #0a2c8c;transform:scaleX(.853);transform-origin:0 0">DEVICE MEMORY MONITOR</div>
<div class="a " style="left:985px;top:340px;width:21px;height:21px;background:linear-gradient(135deg,#5c8cf4 0%,#2c5ce0 50%,#2048c8 100%);border:1px solid #fff;border-radius:3px"><svg class="a" style="left:-1px;top:-1px" width="21" height="21"><rect x="5" y="12.5" width="7" height="3" fill="#fff"/></svg></div>
<div class="a " style="left:1008px;top:340px;width:21px;height:21px;background:linear-gradient(135deg,#5c8cf4 0%,#2c5ce0 50%,#2048c8 100%);border:1px solid #fff;border-radius:3px"><svg class="a" style="left:-1px;top:-1px" width="21" height="21"><rect x="5" y="5.500" width="10.5" height="10" fill="none" stroke="#fff" stroke-width="1.3"/><rect x="4.400" y="4.400" width="11.7" height="3" fill="#fff"/></svg></div>
<div class="a " style="left:1031px;top:340px;width:21px;height:21px;background:linear-gradient(135deg,#e88a6c 0%,#d8502c 45%,#c03818 100%);border:1px solid #fff;border-radius:3px"><svg class="a" style="left:-1px;top:-1px" width="21" height="21"><path d="M5 5L15 15M15 5L5 15" stroke="#fff" stroke-width="2.300" stroke-linecap="round"/></svg></div>
<div class="a " style="left:421px;top:364px;width:633px;height:465.8px;background:#ece9d8"></div>
<div class="a fx " style="left:426px;top:365px;height:17px;color:#000;font-size:11px;letter-spacing:-.2px"><span class="cj" style="width:49.2px;font-size:12.3px;line-height:12.3px;color:#000">菜单起动</span><span style="white-space:pre">(S)</span></div>
<div class="a fx " style="left:500px;top:365px;height:17px;color:#000;font-size:11px;letter-spacing:-.2px"><span class="cj" style="width:36.9px;font-size:12.3px;line-height:12.3px;color:#000">时序图</span><span style="white-space:pre">(T)</span></div>
<div class="a fx " style="left:563px;top:365px;height:17px;color:#000;font-size:11px;letter-spacing:-.2px"><span class="cj" style="width:36.9px;font-size:12.3px;line-height:12.3px;color:#000">软元件</span><span style="white-space:pre">(D)</span></div>
<div class="a fx " style="left:626px;top:365px;height:17px;color:#000;font-size:11px;letter-spacing:-.2px"><span class="cj" style="width:24.6px;font-size:12.3px;line-height:12.3px;color:#000">监视</span><span style="white-space:pre">(M)</span></div>
<div class="a fx " style="left:677.5px;top:365px;height:17px;color:#000;font-size:11px;letter-spacing:-.2px"><span class="cj" style="width:24.6px;font-size:12.3px;line-height:12.3px;color:#000">表示</span><span style="white-space:pre">(P)</span></div>
<div class="a fx " style="left:728px;top:365px;height:17px;color:#000;font-size:11px;letter-spacing:-.2px"><span class="cj" style="width:24.6px;font-size:12.3px;line-height:12.3px;color:#000">窗口</span><span style="white-space:pre">(W)</span></div>
<div class="a " style="left:421px;top:384px;width:633px;height:1px;background:#918f7a"></div>
<div class="a " style="left:421px;top:385px;width:633px;height:1px;background:#bfbcaa"></div>
<div class="a " style="left:510.5px;top:394px;width:33px;height:32px;background:#c0c0c0;border:1px solid;border-color:#fff #6f6d62 #6f6d62 #fff;box-shadow:inset -1px -1px 0 #9a9890, inset 1px 1px 0 #e4e2da"><svg class="a" style="left:0;top:0" width="31" height="30"><path d="M7.500 8v14l13.500-7z" fill="#000"/></svg></div>
<div class="a " style="left:551px;top:394px;width:33px;height:32px;background:#c0c0c0;border:1px solid;border-color:#fff #6f6d62 #6f6d62 #fff;box-shadow:inset -1px -1px 0 #9a9890, inset 1px 1px 0 #e4e2da"><svg class="a" style="left:0;top:0" width="31" height="30"><path d="M8 8v14l12.500-7z" fill="#000"/><rect x="20.500" y="8" width="1.500" height="14" fill="#000"/></svg></div>
<div class="a grp" style="left:591px;top:392px;width:248px;height:35px;"></div>
<div class="a grp" style="left:847px;top:392px;width:125px;height:35px;"></div>
<div class="a fx" style="left:598px;top:387px;width:27px;height:13px;background:#ece9d8"><span class="cj" style="width:24.6px;font-size:12.3px;line-height:12.3px;color:#000;margin-left:1px">表示</span></div>
<div class="a fx" style="left:855px;top:387px;width:15px;height:13px;background:#ece9d8"><span class="cj" style="width:12.3px;font-size:12.3px;line-height:12.3px;color:#000;margin-left:1px">值</span></div>
<div class="a radio on" style="left:599px;top:402px;width:12px;height:12px;"></div>
<div class="a fx " style="left:616px;top:400px;height:17px;color:#000;font-size:11px;letter-spacing:-.5px"><span style="white-space:pre">16</span><span class="cj" style="width:36.9px;font-size:12.3px;line-height:12.3px;color:#000">位整数</span></div>
<div class="a radio" style="left:689px;top:402px;width:12px;height:12px;"></div>
<div class="a fx " style="left:706px;top:400px;height:17px;color:#000;font-size:11px;letter-spacing:-.5px"><span style="white-space:pre">32</span><span class="cj" style="width:36.9px;font-size:12.3px;line-height:12.3px;color:#000">位整数</span></div>
<div class="a radio" style="left:780.5px;top:402px;width:12px;height:12px;"></div>
<div class="a fx " style="left:797.5px;top:400px;height:17px;color:#000;font-size:11px;letter-spacing:-.5px"><span class="cj" style="width:24.6px;font-size:12.3px;line-height:12.3px;color:#000">实数</span></div>
<div class="a radio on" style="left:856px;top:402px;width:12px;height:12px;"></div>
<div class="a" style="left:873.5px;top:401.5px;height:17px;line-height:17px;font-size:11px;color:#000;white-space:pre;">Dec</div>
<div class="a radio" style="left:919.5px;top:402px;width:12px;height:12px;"></div>
<div class="a" style="left:937px;top:401.5px;height:17px;line-height:17px;font-size:11px;color:#000;white-space:pre;">Hex</div>
<div class="a " style="left:421px;top:433px;width:633px;height:1px;background:#55534a"></div>
<div class="a " style="left:421px;top:434px;width:614px;height:333px;background:#808080;overflow:hidden"><div class="a " style="left:24px;top:0px;width:578px;height:340px;background:#6c80d6;border-radius:4px 4px 0 0"></div><div class="a " style="left:24px;top:0px;width:578px;height:26px;border-radius:4px 4px 0 0;background:linear-gradient(180deg,#6a84d8 0%,#7b98e2 12%,#7592de 45%,#86a4e8 85%,#8eaceb 100%)"></div><svg class="a" style="left:32px;top:8px" width="14" height="10" viewBox="0 0 14 10" shape-rendering="crispEdges"><rect x="0" y="1" width="4" height="9" fill="#d81818"/><rect x="0" y="0" width="3" height="2" fill="#801010"/><rect x="4" y="0" width="9" height="3" fill="#181818"/><rect x="5" y="1" width="2" height="1" fill="#fff"/><rect x="8" y="1" width="2" height="1" fill="#fff"/><rect x="11" y="1" width="1" height="1" fill="#fff"/><rect x="4" y="3" width="5" height="7" fill="#b8b8c8"/><rect x="5" y="4" width="1" height="5" fill="#303060"/><rect x="7" y="4" width="1" height="5" fill="#303060"/><rect x="9" y="3" width="4" height="7" fill="#f4f4f4"/><rect x="10" y="4" width="2" height="2" fill="#202020"/><rect x="10" y="7" width="3" height="2" fill="#d8d8e8"/></svg><div class="a" style="left:50px;top:5px;height:16px;line-height:16px;font-size:13px;color:#d6dff6;white-space:pre;font-weight:bold;letter-spacing:.55px">Y  0000-0237</div><div class="a " style="left:530px;top:3px;width:19px;height:19px;background:linear-gradient(135deg,#6d8ae4,#4468d8 60%,#3c5ccc);border:1px solid #c9d4f4;border-radius:3px"><svg class="a" style="left:-1px;top:-1px" width="19" height="19"><rect x="5" y="10.5" width="7" height="3" fill="#fff"/></svg></div><div class="a " style="left:553px;top:3px;width:19px;height:19px;background:linear-gradient(135deg,#7e98e4,#6a86dc);border:1px solid #8ea4e8;border-radius:3px"><svg class="a" style="left:-1px;top:-1px" width="19" height="19"><rect x="5" y="5.500" width="8.5" height="8" fill="none" stroke="#8aa0e6" stroke-width="1.3"/><rect x="4.400" y="4.400" width="9.7" height="3" fill="#8aa0e6"/></svg></div><div class="a " style="left:576px;top:3px;width:19px;height:19px;background:linear-gradient(135deg,#cf8088,#bc5e6c 50%,#b05060);border:1px solid #c9d4f4;border-radius:3px"><svg class="a" style="left:-1px;top:-1px" width="19" height="19"><path d="M5 5L13 13M13 5L5 13" stroke="#fff" stroke-width="2.300" stroke-linecap="round"/></svg></div><div class="a " style="left:28px;top:26px;width:569px;height:310px;background:#ece9d8;border-top:1px solid #fff"></div><div class="a " style="left:581px;top:26px;width:16px;height:310px;background:#f6f5ef"></div><div class="a btn" style="left:581px;top:26px;width:16px;height:16px;"><svg class="a" style="left:0;top:0" width="14" height="14"><path d="M3.500 9h8l-4-4.500z" fill="#000"/></svg></div><div class="a btn" style="left:581px;top:43px;width:16px;height:288px;"></div><div class="a sunk" style="left:29px;top:31px;width:50px;height:17px;"></div><div class="a " style="left:28.5px;top:204.5px;width:50.5px;height:18px;background:#ffff00"></div><div class="a" style="left:17px;top:31.3px;height:16px;line-height:16px;font-size:12px;color:#000;white-space:pre;width:60px;text-align:right;letter-spacing:-.78px">0000</div><div class="a" style="left:19px;top:50.39px;height:16px;line-height:16px;font-size:12px;color:#000;white-space:pre;width:60px;text-align:right;letter-spacing:-.78px">0001</div><div class="a" style="left:19px;top:69.58px;height:16px;line-height:16px;font-size:12px;color:#000;white-space:pre;width:60px;text-align:right;letter-spacing:-.78px">0002</div><div class="a" style="left:19px;top:88.77px;height:16px;line-height:16px;font-size:12px;color:#000;white-space:pre;width:60px;text-align:right;letter-spacing:-.78px">0003</div><div class="a" style="left:19px;top:107.96px;height:16px;line-height:16px;font-size:12px;color:#000;white-space:pre;width:60px;text-align:right;letter-spacing:-.78px">0004</div><div class="a" style="left:19px;top:127.15px;height:16px;line-height:16px;font-size:12px;color:#000;white-space:pre;width:60px;text-align:right;letter-spacing:-.78px">0005</div><div class="a" style="left:19px;top:146.34px;height:16px;line-height:16px;font-size:12px;color:#000;white-space:pre;width:60px;text-align:right;letter-spacing:-.78px">0006</div><div class="a" style="left:19px;top:165.53px;height:16px;line-height:16px;font-size:12px;color:#000;white-space:pre;width:60px;text-align:right;letter-spacing:-.78px">0007</div><div class="a" style="left:19px;top:184.72px;height:16px;line-height:16px;font-size:12px;color:#000;white-space:pre;width:60px;text-align:right;letter-spacing:-.78px">0010</div><div class="a" style="left:19px;top:203.91px;height:16px;line-height:16px;font-size:12px;color:#000;white-space:pre;width:60px;text-align:right;letter-spacing:-.78px">0011</div><div class="a" style="left:19px;top:223.1px;height:16px;line-height:16px;font-size:12px;color:#000;white-space:pre;width:60px;text-align:right;letter-spacing:-.78px">0012</div><div class="a" style="left:19px;top:242.29px;height:16px;line-height:16px;font-size:12px;color:#000;white-space:pre;width:60px;text-align:right;letter-spacing:-.78px">0013</div><div class="a" style="left:19px;top:261.48px;height:16px;line-height:16px;font-size:12px;color:#000;white-space:pre;width:60px;text-align:right;letter-spacing:-.78px">0014</div><div class="a" style="left:19px;top:280.67px;height:16px;line-height:16px;font-size:12px;color:#000;white-space:pre;width:60px;text-align:right;letter-spacing:-.78px">0015</div><div class="a" style="left:19px;top:299.86px;height:16px;line-height:16px;font-size:12px;color:#000;white-space:pre;width:60px;text-align:right;letter-spacing:-.78px">0016</div><div class="a" style="left:19px;top:319.05px;height:16px;line-height:16px;font-size:12px;color:#000;white-space:pre;width:60px;text-align:right;letter-spacing:-.78px">0017</div><div class="a" style="left:74.4px;top:29.8px;height:16px;line-height:16px;font-size:12px;color:#000;white-space:pre;width:60px;text-align:right;letter-spacing:-.78px">0020</div><div class="a" style="left:74.4px;top:50.39px;height:16px;line-height:16px;font-size:12px;color:#000;white-space:pre;width:60px;text-align:right;letter-spacing:-.78px">0021</div><div class="a" style="left:74.4px;top:69.58px;height:16px;line-height:16px;font-size:12px;color:#000;white-space:pre;width:60px;text-align:right;letter-spacing:-.78px">0022</div><div class="a" style="left:74.4px;top:88.77px;height:16px;line-height:16px;font-size:12px;color:#000;white-space:pre;width:60px;text-align:right;letter-spacing:-.78px">0023</div><div class="a" style="left:74.4px;top:107.96px;height:16px;line-height:16px;font-size:12px;color:#000;white-space:pre;width:60px;text-align:right;letter-spacing:-.78px">0024</div><div class="a" style="left:74.4px;top:127.15px;height:16px;line-height:16px;font-size:12px;color:#000;white-space:pre;width:60px;text-align:right;letter-spacing:-.78px">0025</div><div class="a" style="left:74.4px;top:146.34px;height:16px;line-height:16px;font-size:12px;color:#000;white-space:pre;width:60px;text-align:right;letter-spacing:-.78px">0026</div><div class="a" style="left:74.4px;top:165.53px;height:16px;line-height:16px;font-size:12px;color:#000;white-space:pre;width:60px;text-align:right;letter-spacing:-.78px">0027</div><div class="a" style="left:74.4px;top:184.72px;height:16px;line-height:16px;font-size:12px;color:#000;white-space:pre;width:60px;text-align:right;letter-spacing:-.78px">0030</div><div class="a" style="left:74.4px;top:203.91px;height:16px;line-height:16px;font-size:12px;color:#000;white-space:pre;width:60px;text-align:right;letter-spacing:-.78px">0031</div><div class="a" style="left:74.4px;top:223.1px;height:16px;line-height:16px;font-size:12px;color:#000;white-space:pre;width:60px;text-align:right;letter-spacing:-.78px">0032</div><div class="a" style="left:74.4px;top:242.29px;height:16px;line-height:16px;font-size:12px;color:#000;white-space:pre;width:60px;text-align:right;letter-spacing:-.78px">0033</div><div class="a" style="left:74.4px;top:261.48px;height:16px;line-height:16px;font-size:12px;color:#000;white-space:pre;width:60px;text-align:right;letter-spacing:-.78px">0034</div><div class="a" style="left:74.4px;top:280.67px;height:16px;line-height:16px;font-size:12px;color:#000;white-space:pre;width:60px;text-align:right;letter-spacing:-.78px">0035</div><div class="a" style="left:74.4px;top:299.86px;height:16px;line-height:16px;font-size:12px;color:#000;white-space:pre;width:60px;text-align:right;letter-spacing:-.78px">0036</div><div class="a" style="left:74.4px;top:319.05px;height:16px;line-height:16px;font-size:12px;color:#000;white-space:pre;width:60px;text-align:right;letter-spacing:-.78px">0037</div><div class="a" style="left:129.8px;top:29.8px;height:16px;line-height:16px;font-size:12px;color:#000;white-space:pre;width:60px;text-align:right;letter-spacing:-.78px">0040</div><div class="a" style="left:129.8px;top:50.39px;height:16px;line-height:16px;font-size:12px;color:#000;white-space:pre;width:60px;text-align:right;letter-spacing:-.78px">0041</div><div class="a" style="left:129.8px;top:69.58px;height:16px;line-height:16px;font-size:12px;color:#000;white-space:pre;width:60px;text-align:right;letter-spacing:-.78px">0042</div><div class="a" style="left:129.8px;top:88.77px;height:16px;line-height:16px;font-size:12px;color:#000;white-space:pre;width:60px;text-align:right;letter-spacing:-.78px">0043</div><div class="a" style="left:129.8px;top:107.96px;height:16px;line-height:16px;font-size:12px;color:#000;white-space:pre;width:60px;text-align:right;letter-spacing:-.78px">0044</div><div class="a" style="left:129.8px;top:127.15px;height:16px;line-height:16px;font-size:12px;color:#000;white-space:pre;width:60px;text-align:right;letter-spacing:-.78px">0045</div><div class="a" style="left:129.8px;top:146.34px;height:16px;line-height:16px;font-size:12px;color:#000;white-space:pre;width:60px;text-align:right;letter-spacing:-.78px">0046</div><div class="a" style="left:129.8px;top:165.53px;height:16px;line-height:16px;font-size:12px;color:#000;white-space:pre;width:60px;text-align:right;letter-spacing:-.78px">0047</div><div class="a" style="left:129.8px;top:184.72px;height:16px;line-height:16px;font-size:12px;color:#000;white-space:pre;width:60px;text-align:right;letter-spacing:-.78px">0050</div><div class="a" style="left:129.8px;top:203.91px;height:16px;line-height:16px;font-size:12px;color:#000;white-space:pre;width:60px;text-align:right;letter-spacing:-.78px">0051</div><div class="a" style="left:129.8px;top:223.1px;height:16px;line-height:16px;font-size:12px;color:#000;white-space:pre;width:60px;text-align:right;letter-spacing:-.78px">0052</div><div class="a" style="left:129.8px;top:242.29px;height:16px;line-height:16px;font-size:12px;color:#000;white-space:pre;width:60px;text-align:right;letter-spacing:-.78px">0053</div><div class="a" style="left:129.8px;top:261.48px;height:16px;line-height:16px;font-size:12px;color:#000;white-space:pre;width:60px;text-align:right;letter-spacing:-.78px">0054</div><div class="a" style="left:129.8px;top:280.67px;height:16px;line-height:16px;font-size:12px;color:#000;white-space:pre;width:60px;text-align:right;letter-spacing:-.78px">0055</div><div class="a" style="left:129.8px;top:299.86px;height:16px;line-height:16px;font-size:12px;color:#000;white-space:pre;width:60px;text-align:right;letter-spacing:-.78px">0056</div><div class="a" style="left:129.8px;top:319.05px;height:16px;line-height:16px;font-size:12px;color:#000;white-space:pre;width:60px;text-align:right;letter-spacing:-.78px">0057</div><div class="a" style="left:185.2px;top:29.8px;height:16px;line-height:16px;font-size:12px;color:#000;white-space:pre;width:60px;text-align:right;letter-spacing:-.78px">0060</div><div class="a" style="left:185.2px;top:50.39px;height:16px;line-height:16px;font-size:12px;color:#000;white-space:pre;width:60px;text-align:right;letter-spacing:-.78px">0061</div><div class="a" style="left:185.2px;top:69.58px;height:16px;line-height:16px;font-size:12px;color:#000;white-space:pre;width:60px;text-align:right;letter-spacing:-.78px">0062</div><div class="a" style="left:185.2px;top:88.77px;height:16px;line-height:16px;font-size:12px;color:#000;white-space:pre;width:60px;text-align:right;letter-spacing:-.78px">0063</div><div class="a" style="left:185.2px;top:107.96px;height:16px;line-height:16px;font-size:12px;color:#000;white-space:pre;width:60px;text-align:right;letter-spacing:-.78px">0064</div><div class="a" style="left:185.2px;top:127.15px;height:16px;line-height:16px;font-size:12px;color:#000;white-space:pre;width:60px;text-align:right;letter-spacing:-.78px">0065</div><div class="a" style="left:185.2px;top:146.34px;height:16px;line-height:16px;font-size:12px;color:#000;white-space:pre;width:60px;text-align:right;letter-spacing:-.78px">0066</div><div class="a" style="left:185.2px;top:165.53px;height:16px;line-height:16px;font-size:12px;color:#000;white-space:pre;width:60px;text-align:right;letter-spacing:-.78px">0067</div><div class="a" style="left:185.2px;top:184.72px;height:16px;line-height:16px;font-size:12px;color:#000;white-space:pre;width:60px;text-align:right;letter-spacing:-.78px">0070</div><div class="a" style="left:185.2px;top:203.91px;height:16px;line-height:16px;font-size:12px;color:#000;white-space:pre;width:60px;text-align:right;letter-spacing:-.78px">0071</div><div class="a" style="left:185.2px;top:223.1px;height:16px;line-height:16px;font-size:12px;color:#000;white-space:pre;width:60px;text-align:right;letter-spacing:-.78px">0072</div><div class="a" style="left:185.2px;top:242.29px;height:16px;line-height:16px;font-size:12px;color:#000;white-space:pre;width:60px;text-align:right;letter-spacing:-.78px">0073</div><div class="a" style="left:185.2px;top:261.48px;height:16px;line-height:16px;font-size:12px;color:#000;white-space:pre;width:60px;text-align:right;letter-spacing:-.78px">0074</div><div class="a" style="left:185.2px;top:280.67px;height:16px;line-height:16px;font-size:12px;color:#000;white-space:pre;width:60px;text-align:right;letter-spacing:-.78px">0075</div><div class="a" style="left:185.2px;top:299.86px;height:16px;line-height:16px;font-size:12px;color:#000;white-space:pre;width:60px;text-align:right;letter-spacing:-.78px">0076</div><div class="a" style="left:185.2px;top:319.05px;height:16px;line-height:16px;font-size:12px;color:#000;white-space:pre;width:60px;text-align:right;letter-spacing:-.78px">0077</div><div class="a" style="left:240.6px;top:29.8px;height:16px;line-height:16px;font-size:12px;color:#000;white-space:pre;width:60px;text-align:right;letter-spacing:-.78px">0100</div><div class="a" style="left:240.6px;top:50.39px;height:16px;line-height:16px;font-size:12px;color:#000;white-space:pre;width:60px;text-align:right;letter-spacing:-.78px">0101</div><div class="a" style="left:240.6px;top:69.58px;height:16px;line-height:16px;font-size:12px;color:#000;white-space:pre;width:60px;text-align:right;letter-spacing:-.78px">0102</div><div class="a" style="left:240.6px;top:88.77px;height:16px;line-height:16px;font-size:12px;color:#000;white-space:pre;width:60px;text-align:right;letter-spacing:-.78px">0103</div><div class="a" style="left:240.6px;top:107.96px;height:16px;line-height:16px;font-size:12px;color:#000;white-space:pre;width:60px;text-align:right;letter-spacing:-.78px">0104</div><div class="a" style="left:240.6px;top:127.15px;height:16px;line-height:16px;font-size:12px;color:#000;white-space:pre;width:60px;text-align:right;letter-spacing:-.78px">0105</div><div class="a" style="left:240.6px;top:146.34px;height:16px;line-height:16px;font-size:12px;color:#000;white-space:pre;width:60px;text-align:right;letter-spacing:-.78px">0106</div><div class="a" style="left:240.6px;top:165.53px;height:16px;line-height:16px;font-size:12px;color:#000;white-space:pre;width:60px;text-align:right;letter-spacing:-.78px">0107</div><div class="a" style="left:240.6px;top:184.72px;height:16px;line-height:16px;font-size:12px;color:#000;white-space:pre;width:60px;text-align:right;letter-spacing:-.78px">0110</div><div class="a" style="left:240.6px;top:203.91px;height:16px;line-height:16px;font-size:12px;color:#000;white-space:pre;width:60px;text-align:right;letter-spacing:-.78px">0111</div><div class="a" style="left:240.6px;top:223.1px;height:16px;line-height:16px;font-size:12px;color:#000;white-space:pre;width:60px;text-align:right;letter-spacing:-.78px">0112</div><div class="a" style="left:240.6px;top:242.29px;height:16px;line-height:16px;font-size:12px;color:#000;white-space:pre;width:60px;text-align:right;letter-spacing:-.78px">0113</div><div class="a" style="left:240.6px;top:261.48px;height:16px;line-height:16px;font-size:12px;color:#000;white-space:pre;width:60px;text-align:right;letter-spacing:-.78px">0114</div><div class="a" style="left:240.6px;top:280.67px;height:16px;line-height:16px;font-size:12px;color:#000;white-space:pre;width:60px;text-align:right;letter-spacing:-.78px">0115</div><div class="a" style="left:240.6px;top:299.86px;height:16px;line-height:16px;font-size:12px;color:#000;white-space:pre;width:60px;text-align:right;letter-spacing:-.78px">0116</div><div class="a" style="left:240.6px;top:319.05px;height:16px;line-height:16px;font-size:12px;color:#000;white-space:pre;width:60px;text-align:right;letter-spacing:-.78px">0117</div><div class="a" style="left:296px;top:29.8px;height:16px;line-height:16px;font-size:12px;color:#000;white-space:pre;width:60px;text-align:right;letter-spacing:-.78px">0120</div><div class="a" style="left:296px;top:50.39px;height:16px;line-height:16px;font-size:12px;color:#000;white-space:pre;width:60px;text-align:right;letter-spacing:-.78px">0121</div><div class="a" style="left:296px;top:69.58px;height:16px;line-height:16px;font-size:12px;color:#000;white-space:pre;width:60px;text-align:right;letter-spacing:-.78px">0122</div><div class="a" style="left:296px;top:88.77px;height:16px;line-height:16px;font-size:12px;color:#000;white-space:pre;width:60px;text-align:right;letter-spacing:-.78px">0123</div><div class="a" style="left:296px;top:107.96px;height:16px;line-height:16px;font-size:12px;color:#000;white-space:pre;width:60px;text-align:right;letter-spacing:-.78px">0124</div><div class="a" style="left:296px;top:127.15px;height:16px;line-height:16px;font-size:12px;color:#000;white-space:pre;width:60px;text-align:right;letter-spacing:-.78px">0125</div><div class="a" style="left:296px;top:146.34px;height:16px;line-height:16px;font-size:12px;color:#000;white-space:pre;width:60px;text-align:right;letter-spacing:-.78px">0126</div><div class="a" style="left:296px;top:165.53px;height:16px;line-height:16px;font-size:12px;color:#000;white-space:pre;width:60px;text-align:right;letter-spacing:-.78px">0127</div><div class="a" style="left:296px;top:184.72px;height:16px;line-height:16px;font-size:12px;color:#000;white-space:pre;width:60px;text-align:right;letter-spacing:-.78px">0130</div><div class="a" style="left:296px;top:203.91px;height:16px;line-height:16px;font-size:12px;color:#000;white-space:pre;width:60px;text-align:right;letter-spacing:-.78px">0131</div><div class="a" style="left:296px;top:223.1px;height:16px;line-height:16px;font-size:12px;color:#000;white-space:pre;width:60px;text-align:right;letter-spacing:-.78px">0132</div><div class="a" style="left:296px;top:242.29px;height:16px;line-height:16px;font-size:12px;color:#000;white-space:pre;width:60px;text-align:right;letter-spacing:-.78px">0133</div><div class="a" style="left:296px;top:261.48px;height:16px;line-height:16px;font-size:12px;color:#000;white-space:pre;width:60px;text-align:right;letter-spacing:-.78px">0134</div><div class="a" style="left:296px;top:280.67px;height:16px;line-height:16px;font-size:12px;color:#000;white-space:pre;width:60px;text-align:right;letter-spacing:-.78px">0135</div><div class="a" style="left:296px;top:299.86px;height:16px;line-height:16px;font-size:12px;color:#000;white-space:pre;width:60px;text-align:right;letter-spacing:-.78px">0136</div><div class="a" style="left:296px;top:319.05px;height:16px;line-height:16px;font-size:12px;color:#000;white-space:pre;width:60px;text-align:right;letter-spacing:-.78px">0137</div><div class="a" style="left:351.4px;top:29.8px;height:16px;line-height:16px;font-size:12px;color:#000;white-space:pre;width:60px;text-align:right;letter-spacing:-.78px">0140</div><div class="a" style="left:351.4px;top:50.39px;height:16px;line-height:16px;font-size:12px;color:#000;white-space:pre;width:60px;text-align:right;letter-spacing:-.78px">0141</div><div class="a" style="left:351.4px;top:69.58px;height:16px;line-height:16px;font-size:12px;color:#000;white-space:pre;width:60px;text-align:right;letter-spacing:-.78px">0142</div><div class="a" style="left:351.4px;top:88.77px;height:16px;line-height:16px;font-size:12px;color:#000;white-space:pre;width:60px;text-align:right;letter-spacing:-.78px">0143</div><div class="a" style="left:351.4px;top:107.96px;height:16px;line-height:16px;font-size:12px;color:#000;white-space:pre;width:60px;text-align:right;letter-spacing:-.78px">0144</div><div class="a" style="left:351.4px;top:127.15px;height:16px;line-height:16px;font-size:12px;color:#000;white-space:pre;width:60px;text-align:right;letter-spacing:-.78px">0145</div><div class="a" style="left:351.4px;top:146.34px;height:16px;line-height:16px;font-size:12px;color:#000;white-space:pre;width:60px;text-align:right;letter-spacing:-.78px">0146</div><div class="a" style="left:351.4px;top:165.53px;height:16px;line-height:16px;font-size:12px;color:#000;white-space:pre;width:60px;text-align:right;letter-spacing:-.78px">0147</div><div class="a" style="left:351.4px;top:184.72px;height:16px;line-height:16px;font-size:12px;color:#000;white-space:pre;width:60px;text-align:right;letter-spacing:-.78px">0150</div><div class="a" style="left:351.4px;top:203.91px;height:16px;line-height:16px;font-size:12px;color:#000;white-space:pre;width:60px;text-align:right;letter-spacing:-.78px">0151</div><div class="a" style="left:351.4px;top:223.1px;height:16px;line-height:16px;font-size:12px;color:#000;white-space:pre;width:60px;text-align:right;letter-spacing:-.78px">0152</div><div class="a" style="left:351.4px;top:242.29px;height:16px;line-height:16px;font-size:12px;color:#000;white-space:pre;width:60px;text-align:right;letter-spacing:-.78px">0153</div><div class="a" style="left:351.4px;top:261.48px;height:16px;line-height:16px;font-size:12px;color:#000;white-space:pre;width:60px;text-align:right;letter-spacing:-.78px">0154</div><div class="a" style="left:351.4px;top:280.67px;height:16px;line-height:16px;font-size:12px;color:#000;white-space:pre;width:60px;text-align:right;letter-spacing:-.78px">0155</div><div class="a" style="left:351.4px;top:299.86px;height:16px;line-height:16px;font-size:12px;color:#000;white-space:pre;width:60px;text-align:right;letter-spacing:-.78px">0156</div><div class="a" style="left:351.4px;top:319.05px;height:16px;line-height:16px;font-size:12px;color:#000;white-space:pre;width:60px;text-align:right;letter-spacing:-.78px">0157</div><div class="a" style="left:406.8px;top:29.8px;height:16px;line-height:16px;font-size:12px;color:#000;white-space:pre;width:60px;text-align:right;letter-spacing:-.78px">0160</div><div class="a" style="left:406.8px;top:50.39px;height:16px;line-height:16px;font-size:12px;color:#000;white-space:pre;width:60px;text-align:right;letter-spacing:-.78px">0161</div><div class="a" style="left:406.8px;top:69.58px;height:16px;line-height:16px;font-size:12px;color:#000;white-space:pre;width:60px;text-align:right;letter-spacing:-.78px">0162</div><div class="a" style="left:406.8px;top:88.77px;height:16px;line-height:16px;font-size:12px;color:#000;white-space:pre;width:60px;text-align:right;letter-spacing:-.78px">0163</div><div class="a" style="left:406.8px;top:107.96px;height:16px;line-height:16px;font-size:12px;color:#000;white-space:pre;width:60px;text-align:right;letter-spacing:-.78px">0164</div><div class="a" style="left:406.8px;top:127.15px;height:16px;line-height:16px;font-size:12px;color:#000;white-space:pre;width:60px;text-align:right;letter-spacing:-.78px">0165</div><div class="a" style="left:406.8px;top:146.34px;height:16px;line-height:16px;font-size:12px;color:#000;white-space:pre;width:60px;text-align:right;letter-spacing:-.78px">0166</div><div class="a" style="left:406.8px;top:165.53px;height:16px;line-height:16px;font-size:12px;color:#000;white-space:pre;width:60px;text-align:right;letter-spacing:-.78px">0167</div><div class="a" style="left:406.8px;top:184.72px;height:16px;line-height:16px;font-size:12px;color:#000;white-space:pre;width:60px;text-align:right;letter-spacing:-.78px">0170</div><div class="a" style="left:406.8px;top:203.91px;height:16px;line-height:16px;font-size:12px;color:#000;white-space:pre;width:60px;text-align:right;letter-spacing:-.78px">0171</div><div class="a" style="left:406.8px;top:223.1px;height:16px;line-height:16px;font-size:12px;color:#000;white-space:pre;width:60px;text-align:right;letter-spacing:-.78px">0172</div><div class="a" style="left:406.8px;top:242.29px;height:16px;line-height:16px;font-size:12px;color:#000;white-space:pre;width:60px;text-align:right;letter-spacing:-.78px">0173</div><div class="a" style="left:406.8px;top:261.48px;height:16px;line-height:16px;font-size:12px;color:#000;white-space:pre;width:60px;text-align:right;letter-spacing:-.78px">0174</div><div class="a" style="left:406.8px;top:280.67px;height:16px;line-height:16px;font-size:12px;color:#000;white-space:pre;width:60px;text-align:right;letter-spacing:-.78px">0175</div><div class="a" style="left:406.8px;top:299.86px;height:16px;line-height:16px;font-size:12px;color:#000;white-space:pre;width:60px;text-align:right;letter-spacing:-.78px">0176</div><div class="a" style="left:406.8px;top:319.05px;height:16px;line-height:16px;font-size:12px;color:#000;white-space:pre;width:60px;text-align:right;letter-spacing:-.78px">0177</div><div class="a" style="left:462.2px;top:29.8px;height:16px;line-height:16px;font-size:12px;color:#000;white-space:pre;width:60px;text-align:right;letter-spacing:-.78px">0200</div><div class="a" style="left:462.2px;top:50.39px;height:16px;line-height:16px;font-size:12px;color:#000;white-space:pre;width:60px;text-align:right;letter-spacing:-.78px">0201</div><div class="a" style="left:462.2px;top:69.58px;height:16px;line-height:16px;font-size:12px;color:#000;white-space:pre;width:60px;text-align:right;letter-spacing:-.78px">0202</div><div class="a" style="left:462.2px;top:88.77px;height:16px;line-height:16px;font-size:12px;color:#000;white-space:pre;width:60px;text-align:right;letter-spacing:-.78px">0203</div><div class="a" style="left:462.2px;top:107.96px;height:16px;line-height:16px;font-size:12px;color:#000;white-space:pre;width:60px;text-align:right;letter-spacing:-.78px">0204</div><div class="a" style="left:462.2px;top:127.15px;height:16px;line-height:16px;font-size:12px;color:#000;white-space:pre;width:60px;text-align:right;letter-spacing:-.78px">0205</div><div class="a" style="left:462.2px;top:146.34px;height:16px;line-height:16px;font-size:12px;color:#000;white-space:pre;width:60px;text-align:right;letter-spacing:-.78px">0206</div><div class="a" style="left:462.2px;top:165.53px;height:16px;line-height:16px;font-size:12px;color:#000;white-space:pre;width:60px;text-align:right;letter-spacing:-.78px">0207</div><div class="a" style="left:462.2px;top:184.72px;height:16px;line-height:16px;font-size:12px;color:#000;white-space:pre;width:60px;text-align:right;letter-spacing:-.78px">0210</div><div class="a" style="left:462.2px;top:203.91px;height:16px;line-height:16px;font-size:12px;color:#000;white-space:pre;width:60px;text-align:right;letter-spacing:-.78px">0211</div><div class="a" style="left:462.2px;top:223.1px;height:16px;line-height:16px;font-size:12px;color:#000;white-space:pre;width:60px;text-align:right;letter-spacing:-.78px">0212</div><div class="a" style="left:462.2px;top:242.29px;height:16px;line-height:16px;font-size:12px;color:#000;white-space:pre;width:60px;text-align:right;letter-spacing:-.78px">0213</div><div class="a" style="left:462.2px;top:261.48px;height:16px;line-height:16px;font-size:12px;color:#000;white-space:pre;width:60px;text-align:right;letter-spacing:-.78px">0214</div><div class="a" style="left:462.2px;top:280.67px;height:16px;line-height:16px;font-size:12px;color:#000;white-space:pre;width:60px;text-align:right;letter-spacing:-.78px">0215</div><div class="a" style="left:462.2px;top:299.86px;height:16px;line-height:16px;font-size:12px;color:#000;white-space:pre;width:60px;text-align:right;letter-spacing:-.78px">0216</div><div class="a" style="left:462.2px;top:319.05px;height:16px;line-height:16px;font-size:12px;color:#000;white-space:pre;width:60px;text-align:right;letter-spacing:-.78px">0217</div><div class="a" style="left:517.6px;top:29.8px;height:16px;line-height:16px;font-size:12px;color:#000;white-space:pre;width:60px;text-align:right;letter-spacing:-.78px">0220</div><div class="a" style="left:517.6px;top:50.39px;height:16px;line-height:16px;font-size:12px;color:#000;white-space:pre;width:60px;text-align:right;letter-spacing:-.78px">0221</div><div class="a" style="left:517.6px;top:69.58px;height:16px;line-height:16px;font-size:12px;color:#000;white-space:pre;width:60px;text-align:right;letter-spacing:-.78px">0222</div><div class="a" style="left:517.6px;top:88.77px;height:16px;line-height:16px;font-size:12px;color:#000;white-space:pre;width:60px;text-align:right;letter-spacing:-.78px">0223</div><div class="a" style="left:517.6px;top:107.96px;height:16px;line-height:16px;font-size:12px;color:#000;white-space:pre;width:60px;text-align:right;letter-spacing:-.78px">0224</div><div class="a" style="left:517.6px;top:127.15px;height:16px;line-height:16px;font-size:12px;color:#000;white-space:pre;width:60px;text-align:right;letter-spacing:-.78px">0225</div><div class="a" style="left:517.6px;top:146.34px;height:16px;line-height:16px;font-size:12px;color:#000;white-space:pre;width:60px;text-align:right;letter-spacing:-.78px">0226</div><div class="a" style="left:517.6px;top:165.53px;height:16px;line-height:16px;font-size:12px;color:#000;white-space:pre;width:60px;text-align:right;letter-spacing:-.78px">0227</div><div class="a" style="left:517.6px;top:184.72px;height:16px;line-height:16px;font-size:12px;color:#000;white-space:pre;width:60px;text-align:right;letter-spacing:-.78px">0230</div><div class="a" style="left:517.6px;top:203.91px;height:16px;line-height:16px;font-size:12px;color:#000;white-space:pre;width:60px;text-align:right;letter-spacing:-.78px">0231</div><div class="a" style="left:517.6px;top:223.1px;height:16px;line-height:16px;font-size:12px;color:#000;white-space:pre;width:60px;text-align:right;letter-spacing:-.78px">0232</div><div class="a" style="left:517.6px;top:242.29px;height:16px;line-height:16px;font-size:12px;color:#000;white-space:pre;width:60px;text-align:right;letter-spacing:-.78px">0233</div><div class="a" style="left:517.6px;top:261.48px;height:16px;line-height:16px;font-size:12px;color:#000;white-space:pre;width:60px;text-align:right;letter-spacing:-.78px">0234</div><div class="a" style="left:517.6px;top:280.67px;height:16px;line-height:16px;font-size:12px;color:#000;white-space:pre;width:60px;text-align:right;letter-spacing:-.78px">0235</div><div class="a" style="left:517.6px;top:299.86px;height:16px;line-height:16px;font-size:12px;color:#000;white-space:pre;width:60px;text-align:right;letter-spacing:-.78px">0236</div><div class="a" style="left:517.6px;top:319.05px;height:16px;line-height:16px;font-size:12px;color:#000;white-space:pre;width:60px;text-align:right;letter-spacing:-.78px">0237</div><div class="a " style="left:285px;top:55px;width:400px;height:249px;background:#0a3ad8;border-radius:7px 7px 0 0"></div><div class="a " style="left:285px;top:55px;width:400px;height:30px;border-radius:7px 7px 0 0;background:linear-gradient(180deg,#0a50d8 0%,#3a86f8 7%,#1064f0 22%,#0a5aee 50%,#0856ea 80%,#0a5af0 92%,#043cc4 100%)"></div><svg class="a" style="left:293px;top:66px" width="14" height="10" viewBox="0 0 14 10" shape-rendering="crispEdges"><rect x="0" y="1" width="4" height="9" fill="#d81818"/><rect x="0" y="0" width="3" height="2" fill="#801010"/><rect x="4" y="0" width="9" height="3" fill="#181818"/><rect x="5" y="1" width="2" height="1" fill="#fff"/><rect x="8" y="1" width="2" height="1" fill="#fff"/><rect x="11" y="1" width="1" height="1" fill="#fff"/><rect x="4" y="3" width="5" height="7" fill="#b8b8c8"/><rect x="5" y="4" width="1" height="5" fill="#303060"/><rect x="7" y="4" width="1" height="5" fill="#303060"/><rect x="9" y="3" width="4" height="7" fill="#f4f4f4"/><rect x="10" y="4" width="2" height="2" fill="#202020"/><rect x="10" y="7" width="3" height="2" fill="#d8d8e8"/></svg><div class="a" style="left:311px;top:64px;height:16px;line-height:16px;font-size:13px;color:#fff;white-space:pre;font-weight:bold;letter-spacing:.4px;text-shadow:1px 1px 0 #0a2c8c">D  0- 49</div><div class="a " style="left:289px;top:84px;width:396px;height:216px;background:#ece9d8"></div><div class="a sunk" style="left:290px;top:90.5px;width:49.5px;height:16.5px;"></div><div class="a" style="left:298.5px;top:91px;height:16px;line-height:16px;font-size:12px;color:#000;white-space:pre;width:40px;text-align:right;letter-spacing:-.7px">0</div><div class="a sunk2" style="left:342.5px;top:90.7px;width:71.5px;height:17.5px;background:#fff"></div><div class="a " style="left:400px;top:92.7px;width:12px;height:13.5px;background:#316ac5"></div><div class="a" style="left:369px;top:91.7px;height:16px;line-height:16px;font-size:12px;color:#fff;white-space:pre;width:43px;text-align:right;letter-spacing:-.7px">10</div><div class="a" style="left:299.5px;top:108.83px;height:16px;line-height:16px;font-size:12px;color:#000;white-space:pre;width:40px;text-align:right;letter-spacing:-.7px">1</div><div class="a sunk2" style="left:342.5px;top:110.03px;width:71.5px;height:17.5px;background:#fff"></div><div class="a" style="left:342.5px;top:111.53px;height:16px;line-height:16px;font-size:12px;color:#000;white-space:pre;width:70px;text-align:right;">0</div><div class="a" style="left:299.5px;top:128.16px;height:16px;line-height:16px;font-size:12px;color:#000;white-space:pre;width:40px;text-align:right;letter-spacing:-.7px">2</div><div class="a sunk2" style="left:342.5px;top:129.36px;width:71.5px;height:17.5px;background:#fff"></div><div class="a" style="left:342.5px;top:130.86px;height:16px;line-height:16px;font-size:12px;color:#000;white-space:pre;width:70px;text-align:right;">0</div><div class="a" style="left:299.5px;top:147.49px;height:16px;line-height:16px;font-size:12px;color:#000;white-space:pre;width:40px;text-align:right;letter-spacing:-.7px">3</div><div class="a sunk2" style="left:342.5px;top:148.69px;width:71.5px;height:17.5px;background:#fff"></div><div class="a" style="left:342.5px;top:150.19px;height:16px;line-height:16px;font-size:12px;color:#000;white-space:pre;width:70px;text-align:right;">0</div><div class="a" style="left:299.5px;top:166.82px;height:16px;line-height:16px;font-size:12px;color:#000;white-space:pre;width:40px;text-align:right;letter-spacing:-.7px">4</div><div class="a sunk2" style="left:342.5px;top:168.02px;width:71.5px;height:17.5px;background:#fff"></div><div class="a" style="left:342.5px;top:169.52px;height:16px;line-height:16px;font-size:12px;color:#000;white-space:pre;width:70px;text-align:right;">0</div><div class="a" style="left:299.5px;top:186.15px;height:16px;line-height:16px;font-size:12px;color:#000;white-space:pre;width:40px;text-align:right;letter-spacing:-.7px">5</div><div class="a sunk2" style="left:342.5px;top:187.35px;width:71.5px;height:17.5px;background:#fff"></div><div class="a" style="left:342.5px;top:188.85px;height:16px;line-height:16px;font-size:12px;color:#000;white-space:pre;width:70px;text-align:right;">0</div><div class="a" style="left:299.5px;top:205.48px;height:16px;line-height:16px;font-size:12px;color:#000;white-space:pre;width:40px;text-align:right;letter-spacing:-.7px">6</div><div class="a sunk2" style="left:342.5px;top:206.68px;width:71.5px;height:17.5px;background:#fff"></div><div class="a" style="left:342.5px;top:208.18px;height:16px;line-height:16px;font-size:12px;color:#000;white-space:pre;width:70px;text-align:right;">0</div><div class="a" style="left:299.5px;top:224.81px;height:16px;line-height:16px;font-size:12px;color:#000;white-space:pre;width:40px;text-align:right;letter-spacing:-.7px">7</div><div class="a sunk2" style="left:342.5px;top:226.01px;width:71.5px;height:17.5px;background:#fff"></div><div class="a" style="left:342.5px;top:227.51px;height:16px;line-height:16px;font-size:12px;color:#000;white-space:pre;width:70px;text-align:right;">0</div><div class="a" style="left:299.5px;top:244.14px;height:16px;line-height:16px;font-size:12px;color:#000;white-space:pre;width:40px;text-align:right;letter-spacing:-.7px">8</div><div class="a sunk2" style="left:342.5px;top:245.34px;width:71.5px;height:17.5px;background:#fff"></div><div class="a" style="left:342.5px;top:246.84px;height:16px;line-height:16px;font-size:12px;color:#000;white-space:pre;width:70px;text-align:right;">0</div><div class="a" style="left:299.5px;top:263.47px;height:16px;line-height:16px;font-size:12px;color:#000;white-space:pre;width:40px;text-align:right;letter-spacing:-.7px">9</div><div class="a sunk2" style="left:342.5px;top:264.67px;width:71.5px;height:17.5px;background:#fff"></div><div class="a" style="left:342.5px;top:266.17px;height:16px;line-height:16px;font-size:12px;color:#000;white-space:pre;width:70px;text-align:right;">0</div><div class="a" style="left:426.5px;top:89.5px;height:16px;line-height:16px;font-size:12px;color:#000;white-space:pre;width:40px;text-align:right;letter-spacing:-.7px">10</div><div class="a sunk2" style="left:468.5px;top:90.7px;width:71.5px;height:17.5px;background:#fff"></div><div class="a" style="left:468.5px;top:92.2px;height:16px;line-height:16px;font-size:12px;color:#000;white-space:pre;width:70px;text-align:right;">0</div><div class="a" style="left:426.5px;top:108.83px;height:16px;line-height:16px;font-size:12px;color:#000;white-space:pre;width:40px;text-align:right;letter-spacing:-.7px">11</div><div class="a sunk2" style="left:468.5px;top:110.03px;width:71.5px;height:17.5px;background:#fff"></div><div class="a" style="left:468.5px;top:111.53px;height:16px;line-height:16px;font-size:12px;color:#000;white-space:pre;width:70px;text-align:right;">0</div><div class="a" style="left:426.5px;top:128.16px;height:16px;line-height:16px;font-size:12px;color:#000;white-space:pre;width:40px;text-align:right;letter-spacing:-.7px">12</div><div class="a sunk2" style="left:468.5px;top:129.36px;width:71.5px;height:17.5px;background:#fff"></div><div class="a" style="left:468.5px;top:130.86px;height:16px;line-height:16px;font-size:12px;color:#000;white-space:pre;width:70px;text-align:right;">0</div><div class="a" style="left:426.5px;top:147.49px;height:16px;line-height:16px;font-size:12px;color:#000;white-space:pre;width:40px;text-align:right;letter-spacing:-.7px">13</div><div class="a sunk2" style="left:468.5px;top:148.69px;width:71.5px;height:17.5px;background:#fff"></div><div class="a" style="left:468.5px;top:150.19px;height:16px;line-height:16px;font-size:12px;color:#000;white-space:pre;width:70px;text-align:right;">0</div><div class="a" style="left:426.5px;top:166.82px;height:16px;line-height:16px;font-size:12px;color:#000;white-space:pre;width:40px;text-align:right;letter-spacing:-.7px">14</div><div class="a sunk2" style="left:468.5px;top:168.02px;width:71.5px;height:17.5px;background:#fff"></div><div class="a" style="left:468.5px;top:169.52px;height:16px;line-height:16px;font-size:12px;color:#000;white-space:pre;width:70px;text-align:right;">0</div><div class="a" style="left:426.5px;top:186.15px;height:16px;line-height:16px;font-size:12px;color:#000;white-space:pre;width:40px;text-align:right;letter-spacing:-.7px">15</div><div class="a sunk2" style="left:468.5px;top:187.35px;width:71.5px;height:17.5px;background:#fff"></div><div class="a" style="left:468.5px;top:188.85px;height:16px;line-height:16px;font-size:12px;color:#000;white-space:pre;width:70px;text-align:right;">0</div><div class="a" style="left:426.5px;top:205.48px;height:16px;line-height:16px;font-size:12px;color:#000;white-space:pre;width:40px;text-align:right;letter-spacing:-.7px">16</div><div class="a sunk2" style="left:468.5px;top:206.68px;width:71.5px;height:17.5px;background:#fff"></div><div class="a" style="left:468.5px;top:208.18px;height:16px;line-height:16px;font-size:12px;color:#000;white-space:pre;width:70px;text-align:right;">0</div><div class="a" style="left:426.5px;top:224.81px;height:16px;line-height:16px;font-size:12px;color:#000;white-space:pre;width:40px;text-align:right;letter-spacing:-.7px">17</div><div class="a sunk2" style="left:468.5px;top:226.01px;width:71.5px;height:17.5px;background:#fff"></div><div class="a" style="left:468.5px;top:227.51px;height:16px;line-height:16px;font-size:12px;color:#000;white-space:pre;width:70px;text-align:right;">0</div><div class="a" style="left:426.5px;top:244.14px;height:16px;line-height:16px;font-size:12px;color:#000;white-space:pre;width:40px;text-align:right;letter-spacing:-.7px">18</div><div class="a sunk2" style="left:468.5px;top:245.34px;width:71.5px;height:17.5px;background:#fff"></div><div class="a" style="left:468.5px;top:246.84px;height:16px;line-height:16px;font-size:12px;color:#000;white-space:pre;width:70px;text-align:right;">0</div><div class="a" style="left:426.5px;top:263.47px;height:16px;line-height:16px;font-size:12px;color:#000;white-space:pre;width:40px;text-align:right;letter-spacing:-.7px">19</div><div class="a sunk2" style="left:468.5px;top:264.67px;width:71.5px;height:17.5px;background:#fff"></div><div class="a" style="left:468.5px;top:266.17px;height:16px;line-height:16px;font-size:12px;color:#000;white-space:pre;width:70px;text-align:right;">0</div><div class="a" style="left:553px;top:89.5px;height:16px;line-height:16px;font-size:12px;color:#000;white-space:pre;width:40px;text-align:right;letter-spacing:-.7px">20</div><div class="a sunk2" style="left:595px;top:90.7px;width:71.5px;height:17.5px;background:#fff"></div><div class="a" style="left:595px;top:92.2px;height:16px;line-height:16px;font-size:12px;color:#000;white-space:pre;width:70px;text-align:right;">0</div><div class="a" style="left:553px;top:108.83px;height:16px;line-height:16px;font-size:12px;color:#000;white-space:pre;width:40px;text-align:right;letter-spacing:-.7px">21</div><div class="a sunk2" style="left:595px;top:110.03px;width:71.5px;height:17.5px;background:#fff"></div><div class="a" style="left:595px;top:111.53px;height:16px;line-height:16px;font-size:12px;color:#000;white-space:pre;width:70px;text-align:right;">0</div><div class="a" style="left:553px;top:128.16px;height:16px;line-height:16px;font-size:12px;color:#000;white-space:pre;width:40px;text-align:right;letter-spacing:-.7px">22</div><div class="a sunk2" style="left:595px;top:129.36px;width:71.5px;height:17.5px;background:#fff"></div><div class="a" style="left:595px;top:130.86px;height:16px;line-height:16px;font-size:12px;color:#000;white-space:pre;width:70px;text-align:right;">0</div><div class="a" style="left:553px;top:147.49px;height:16px;line-height:16px;font-size:12px;color:#000;white-space:pre;width:40px;text-align:right;letter-spacing:-.7px">23</div><div class="a sunk2" style="left:595px;top:148.69px;width:71.5px;height:17.5px;background:#fff"></div><div class="a" style="left:595px;top:150.19px;height:16px;line-height:16px;font-size:12px;color:#000;white-space:pre;width:70px;text-align:right;">0</div><div class="a" style="left:553px;top:166.82px;height:16px;line-height:16px;font-size:12px;color:#000;white-space:pre;width:40px;text-align:right;letter-spacing:-.7px">24</div><div class="a sunk2" style="left:595px;top:168.02px;width:71.5px;height:17.5px;background:#fff"></div><div class="a" style="left:595px;top:169.52px;height:16px;line-height:16px;font-size:12px;color:#000;white-space:pre;width:70px;text-align:right;">0</div><div class="a" style="left:553px;top:186.15px;height:16px;line-height:16px;font-size:12px;color:#000;white-space:pre;width:40px;text-align:right;letter-spacing:-.7px">25</div><div class="a sunk2" style="left:595px;top:187.35px;width:71.5px;height:17.5px;background:#fff"></div><div class="a" style="left:595px;top:188.85px;height:16px;line-height:16px;font-size:12px;color:#000;white-space:pre;width:70px;text-align:right;">0</div><div class="a" style="left:553px;top:205.48px;height:16px;line-height:16px;font-size:12px;color:#000;white-space:pre;width:40px;text-align:right;letter-spacing:-.7px">26</div><div class="a sunk2" style="left:595px;top:206.68px;width:71.5px;height:17.5px;background:#fff"></div><div class="a" style="left:595px;top:208.18px;height:16px;line-height:16px;font-size:12px;color:#000;white-space:pre;width:70px;text-align:right;">0</div><div class="a" style="left:553px;top:224.81px;height:16px;line-height:16px;font-size:12px;color:#000;white-space:pre;width:40px;text-align:right;letter-spacing:-.7px">27</div><div class="a sunk2" style="left:595px;top:226.01px;width:71.5px;height:17.5px;background:#fff"></div><div class="a" style="left:595px;top:227.51px;height:16px;line-height:16px;font-size:12px;color:#000;white-space:pre;width:70px;text-align:right;">0</div><div class="a" style="left:553px;top:244.14px;height:16px;line-height:16px;font-size:12px;color:#000;white-space:pre;width:40px;text-align:right;letter-spacing:-.7px">28</div><div class="a sunk2" style="left:595px;top:245.34px;width:71.5px;height:17.5px;background:#fff"></div><div class="a" style="left:595px;top:246.84px;height:16px;line-height:16px;font-size:12px;color:#000;white-space:pre;width:70px;text-align:right;">0</div><div class="a" style="left:553px;top:263.47px;height:16px;line-height:16px;font-size:12px;color:#000;white-space:pre;width:40px;text-align:right;letter-spacing:-.7px">29</div><div class="a sunk2" style="left:595px;top:264.67px;width:71.5px;height:17.5px;background:#fff"></div><div class="a" style="left:595px;top:266.17px;height:16px;line-height:16px;font-size:12px;color:#000;white-space:pre;width:70px;text-align:right;">0</div><div class="a " style="left:289px;top:290px;width:396px;height:10px;background:#efede2;border-top:1px solid #f8f7f0"></div><div class="a " style="left:290px;top:291px;width:16px;height:9px;border-right:1px solid #8d8b7c"><svg class="a" style="left:0;top:0" width="14" height="8"><path d="M10 1v7l-4-3.500z" fill="#000"/></svg></div></div>
<div class="a " style="left:1035px;top:434px;width:19px;height:333px;background:linear-gradient(90deg,#f3f1ec,#fefefb)"></div>
<div class="a " style="left:1037px;top:436px;width:14px;height:15px;background:linear-gradient(135deg,#cbdafc,#bccdf8);border:1px solid #fff;border-radius:2px;box-shadow:0 0 0 1px #b4c4ee"><svg class="a" style="left:-1.500px;top:-1px" width="15" height="15"><path d="M4.500 9.500l3.500-3.500 3.500 3.500" fill="none" stroke="#4d6185" stroke-width="2.200"/></svg></div>
<div class="a " style="left:1037px;top:751px;width:14px;height:15px;background:linear-gradient(135deg,#cbdafc,#bccdf8);border:1px solid #fff;border-radius:2px;box-shadow:0 0 0 1px #b4c4ee"><svg class="a" style="left:-1.500px;top:-1px" width="15" height="15"><path d="M4.500 6l3.500 3.500 3.500-3.500" fill="none" stroke="#4d6185" stroke-width="2.200"/></svg></div>
<div class="a " style="left:1037px;top:458px;width:14px;height:264px;background:linear-gradient(90deg,#cad9fd,#bdcefb 60%,#b6c8f6);border:1px solid #fff;border-radius:2px;box-shadow:0 0 0 1px #b4c4ee"></div>
<div class="a " style="left:1041px;top:586px;width:6px;height:1px;background:#8fa5d8"></div>
<div class="a " style="left:1041px;top:588px;width:6px;height:1px;background:#8fa5d8"></div>
<div class="a " style="left:1041px;top:590px;width:6px;height:1px;background:#8fa5d8"></div>
<div class="a " style="left:1041px;top:592px;width:6px;height:1px;background:#8fa5d8"></div>
<div class="a " style="left:421px;top:767px;width:614px;height:17px;background:linear-gradient(180deg,#f3f1ec,#fefefb)"></div>
<div class="a " style="left:423.5px;top:768.5px;width:14px;height:15px;background:linear-gradient(135deg,#cbdafc,#bccdf8);border:1px solid #fff;border-radius:2px;box-shadow:0 0 0 1px #b4c4ee"><svg class="a" style="left:-1.500px;top:-1px" width="15" height="15"><path d="M9.500 4l-3.500 3.500 3.500 3.500" fill="none" stroke="#4d6185" stroke-width="2.200"/></svg></div>
<div class="a " style="left:1019.5px;top:768.5px;width:14px;height:15px;background:linear-gradient(135deg,#cbdafc,#bccdf8);border:1px solid #fff;border-radius:2px;box-shadow:0 0 0 1px #b4c4ee"><svg class="a" style="left:-1.500px;top:-1px" width="15" height="15"><path d="M6 4l3.500 3.500-3.500 3.500" fill="none" stroke="#4d6185" stroke-width="2.200"/></svg></div>
<div class="a " style="left:441px;top:768px;width:371px;height:15px;background:linear-gradient(180deg,#cad9fd,#bdcefb 60%,#b6c8f6);border:1px solid #fff;border-radius:2px;box-shadow:0 0 0 1px #b4c4ee"></div>
<div class="a " style="left:622px;top:773px;width:1px;height:6px;background:#8fa5d8"></div>
<div class="a " style="left:624px;top:773px;width:1px;height:6px;background:#8fa5d8"></div>
<div class="a " style="left:626px;top:773px;width:1px;height:6px;background:#8fa5d8"></div>
<div class="a " style="left:628px;top:773px;width:1px;height:6px;background:#8fa5d8"></div>
<div class="a " style="left:422px;top:787.5px;width:59.5px;height:20.5px;border:1px solid;border-color:#fff #aca899 #aca899 #fff"></div>
<div class="a fx " style="left:427px;top:789px;height:17px;color:#aca899;font-size:11px;letter-spacing:-.3px"><span style="white-space:pre">F1:</span></div>
<div class="a " style="left:483px;top:787.5px;width:59.5px;height:20.5px;border:1px solid;border-color:#fff #aca899 #aca899 #fff"></div>
<div class="a fx " style="left:488px;top:789px;height:17px;color:#000;font-size:11px;letter-spacing:-.3px"><span style="white-space:pre">F2: </span><span class="cj" style="width:24.6px;font-size:12.3px;line-height:12.3px;color:#000">新建</span></div>
<div class="a " style="left:544px;top:787.5px;width:59.5px;height:20.5px;border:1px solid;border-color:#fff #aca899 #aca899 #fff"></div>
<div class="a fx " style="left:549px;top:789px;height:17px;color:#000;font-size:11px;letter-spacing:-.3px"><span style="white-space:pre">F3:</span><span class="cj" style="width:24.6px;font-size:12.3px;line-height:12.3px;color:#000">停止</span></div>
<div class="a " style="left:605px;top:787.5px;width:59.5px;height:20.5px;border:1px solid;border-color:#fff #aca899 #aca899 #fff"></div>
<div class="a fx " style="left:610px;top:789px;height:17px;color:#aca899;font-size:11px;letter-spacing:-.3px"><span style="white-space:pre">F4:</span></div>
<div class="a " style="left:666px;top:787.5px;width:59.5px;height:20.5px;border:1px solid;border-color:#fff #aca899 #aca899 #fff"></div>
<div class="a fx " style="left:671px;top:789px;height:17px;color:#aca899;font-size:11px;letter-spacing:-.3px"><span style="white-space:pre">F5:</span></div>
<div class="a " style="left:727px;top:787.5px;width:59.5px;height:20.5px;border:1px solid;border-color:#fff #aca899 #aca899 #fff"></div>
<div class="a fx " style="left:732px;top:789px;height:17px;color:#aca899;font-size:11px;letter-spacing:-.3px"><span style="white-space:pre">F6:</span></div>
<div class="a " style="left:788px;top:787.5px;width:59.5px;height:20.5px;border:1px solid;border-color:#fff #aca899 #aca899 #fff"></div>
<div class="a fx " style="left:793px;top:789px;height:17px;color:#000;font-size:11px;letter-spacing:-.3px"><span style="white-space:pre">F7: </span><span class="cj" style="width:24.6px;font-size:12.3px;line-height:12.3px;color:#000">查看</span></div>
<div class="a " style="left:849px;top:787.5px;width:59.5px;height:20.5px;border:1px solid;border-color:#fff #aca899 #aca899 #fff"></div>
<div class="a fx " style="left:854px;top:789px;height:17px;color:#000;font-size:11px;letter-spacing:-.3px"><span style="white-space:pre">F8: </span><span class="cj" style="width:12.3px;font-size:12.3px;line-height:12.3px;color:#000">值</span></div>
<div class="a " style="left:910px;top:787.5px;width:59.5px;height:20.5px;border:1px solid;border-color:#fff #aca899 #aca899 #fff"></div>
<div class="a fx " style="left:915px;top:789px;height:17px;color:#000;font-size:11px;letter-spacing:-.3px"><span style="white-space:pre">F9:Jump</span></div>
<div class="a " style="left:971px;top:787.5px;width:59.5px;height:20.5px;border:1px solid;border-color:#fff #aca899 #aca899 #fff"></div>
<div class="a fx " style="left:976px;top:789px;height:17px;color:#000;font-size:11px;letter-spacing:-.3px"><span style="white-space:pre">F10: </span><span class="cj" style="width:24.6px;font-size:12.3px;line-height:12.3px;color:#000">测试</span></div>
<div class="a " style="left:421px;top:809px;width:633px;height:1px;background:#fff"></div>
<div class="a sunk1" style="left:422px;top:810px;width:66px;height:19.5px;"></div>
<div class="a sunk1" style="left:491px;top:810px;width:65px;height:19.5px;"></div>
<div class="a sunk1" style="left:559px;top:810px;width:105px;height:19.5px;"></div>
<div class="a sunk1" style="left:667px;top:810px;width:367px;height:19.5px;"></div>
<div class="a fx" style="left:561.5px;top:812.5px;width:40px;height:14px;"><span class="cj" style="width:36.9px;font-size:12.3px;line-height:12.3px;color:#000">监视中</span></div>
<svg class="a" style="left:1039px;top:794px" width="14" height="14"><path d="M13 1L1 13M13 5L5 13M13 9L9 13" stroke="#aca899" stroke-width="1.300"/><path d="M13 2L2 13M13 6L6 13M13 10L10 13" stroke="#fff" stroke-width="1"/></svg>
<svg class="a" style="left:1039px;top:816px" width="14" height="14"><path d="M13 1L1 13M13 5L5 13M13 9L9 13" stroke="#aca899" stroke-width="1.300"/><path d="M13 2L2 13M13 6L6 13M13 10L10 13" stroke="#fff" stroke-width="1"/></svg>
<div class="a " style="left:586px;top:834px;width:90px;height:12px;background:#0a0aa6;border:1px solid #16168a;border-top:none;box-shadow:inset 1px -1px 0 #fff, inset -1px 0 0 #fff"></div>
</body></html>
